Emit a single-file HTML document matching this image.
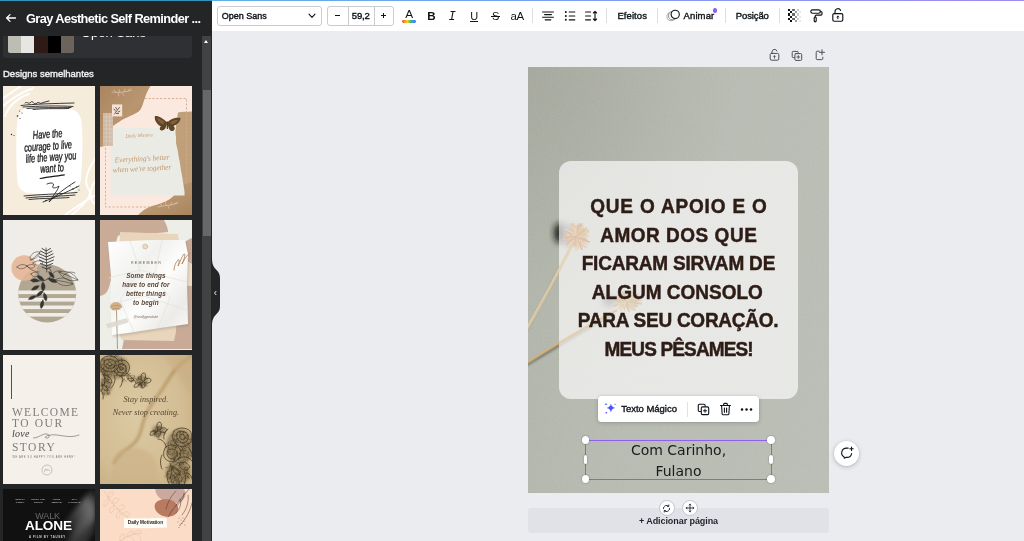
<!DOCTYPE html>
<html lang="pt-BR">
<head>
<meta charset="utf-8">
<title>Gray Aesthetic Self Reminder</title>
<style>
*{box-sizing:border-box;margin:0;padding:0}
html,body{width:1024px;height:541px;overflow:hidden}
body{position:relative;background:#ebecf0;font-family:"Liberation Sans",sans-serif;color:#0e1318}
.abs{position:absolute}
#topline{left:0;top:0;width:1024px;height:1px;background:linear-gradient(90deg,#2f93bd 0,#2f93bd 211px,#5fb0e6 212px,#7f9cf0 60%,#a08af0 100%);z-index:50}
/* ---------- sidebar ---------- */
#side{z-index:10;left:0;top:0;width:211.5px;height:541px;background:#232526;overflow:hidden}
#side .hdr{left:0;top:0;width:211px;height:36px;background:#232526;z-index:5}
#side .title{left:26px;top:11.3px;font-size:12.8px;font-weight:bold;color:#fff;white-space:nowrap;letter-spacing:-.6px;line-height:15px}
#card{left:3px;top:20px;width:188.5px;height:38px;background:#2f3033;border-radius:3px}
#sw{left:5px;top:4px;width:66px;height:29px;border-radius:2px;overflow:hidden;display:flex}
#sw i{flex:1;display:block}
#fontname{left:78px;top:3.6px;font-size:13px;color:#fff;white-space:nowrap;line-height:17px}
#simil{left:3px;top:67.6px;font-size:9.5px;color:#f0f0f1;white-space:nowrap;line-height:12px;-webkit-text-stroke:.4px #f0f0f1}
.th{position:absolute;width:91.8px;height:129.7px;overflow:hidden}
#track{left:201.5px;top:36px;width:9.3px;height:505px;background:#424242}
#thumb{left:203px;top:90px;width:7.5px;height:146px;background:#686868}
#uparr{left:203.6px;top:39.8px;width:0;height:0;border-left:2.6px solid transparent;border-right:2.6px solid transparent;border-bottom:3.2px solid #fff}
/* ---------- toolbar ---------- */
#bar{left:0;top:0;width:1024px;height:31px;background:#fff}
.box{position:absolute;border:1px solid #c9ccd2;border-radius:3px;background:#fff}
.tb{position:absolute;font-size:9.5px;line-height:12px;white-space:nowrap;color:#0e1318;-webkit-text-stroke:.38px #0e1318}
.dv{position:absolute;top:8px;width:1px;height:15px;background:#dcdee2}

/* ---------- workspace ---------- */
#page{left:528px;top:67px;width:301px;height:426px;overflow:hidden;background:
 radial-gradient(ellipse 70% 55% at 0% 0%,rgba(150,152,141,.45) 0,rgba(150,152,141,0) 100%),
 linear-gradient(100deg,#aeb1a6 0,#b6b9af 42%,#b8bcb3 100%)}
#glass{left:31px;top:93.5px;width:239px;height:238px;border-radius:12px;background:rgba(255,255,255,.66)}
.ml{position:absolute;left:0;width:301px;text-align:center;font-weight:bold;font-size:19px;line-height:22px;color:#2e1c16;white-space:nowrap;transform:scaleY(1.05);transform-origin:50% 80%;-webkit-text-stroke:.45px #2e1c16}
#sel{left:585px;top:439.5px;width:186.6px;height:40.5px;border:1.5px solid #8f5ff5}
.hd{position:absolute;width:7.6px;height:7.6px;border-radius:50%;background:#fff;box-shadow:0 0 1.5px rgba(30,30,40,.55)}
.pill{position:absolute;width:3.6px;height:9.4px;border-radius:2px;background:#fff;box-shadow:0 0 1.5px rgba(30,30,40,.55)}
.sig{position:absolute;left:0;width:301px;text-align:center;font-family:"DejaVu Sans","Liberation Sans",sans-serif;font-size:14px;line-height:20px;color:#1a1a1a;white-space:nowrap}
#ftb{left:598px;top:396px;width:161px;height:25.5px;background:#fff;border-radius:3.5px;box-shadow:0 0 0 .5px rgba(60,64,72,.08),0 1px 4px rgba(40,44,52,.22)}
#addp{left:528px;top:508px;width:301px;height:25px;border-radius:3px;background:#e1e2e7}
.rb{position:absolute;width:15.8px;height:15.8px;border-radius:50%;background:#fff;border:1px solid #c2c6ce}
#cmt{left:834px;top:440.5px;width:25px;height:25px;border-radius:50%;background:#fff;box-shadow:0 1px 4px rgba(40,44,60,.28),0 0 0 .5px rgba(60,64,72,.06)}

.hw{font:italic 11.500px/12px "Liberation Sans",sans-serif;color:#1c1c1c;text-align:center;white-space:nowrap;transform:rotate(-4deg) scaleX(.64);letter-spacing:0;-webkit-text-stroke:.35px #1c1c1c}
.sc{font-family:"Liberation Serif",serif;font-style:italic;line-height:9px;color:#c49a6f;text-align:center;white-space:nowrap;transform:rotate(-3deg)}
.t4{left:0;width:92px;text-align:center;font:italic bold 6.400px/8px "Liberation Sans",sans-serif;color:#5b4636;white-space:nowrap;letter-spacing:.1px}
.t5{left:9px;font:11.500px/13px "Liberation Serif",serif;color:#807d78;white-space:nowrap;letter-spacing:1.050px}
.t6{left:0;width:92px;text-align:center;font:italic 8.200px/10px "Liberation Serif",serif;color:#57472f;white-space:nowrap}
.t7{top:8.600px;font:bold 2.200px/3.300px "Liberation Sans",sans-serif;color:#c9c9c9;text-align:center;white-space:nowrap;letter-spacing:.2px}
</style>
</head>
<body>
<div id="topline" class="abs"></div>

<!-- SIDEBAR -->
<div id="side" class="abs">
  <div id="card" class="abs">
    <div id="sw" class="abs"><i style="background:#bdbdb4"></i><i style="background:#e6e6e2"></i><i style="background:#2e1b15"></i><i style="background:#000"></i><i style="background:#6c635d"></i></div>
    <div id="fontname" class="abs">Open Sans</div>
  </div>
  <div class="hdr abs">
    <svg class="abs" style="left:5px;top:12px" width="12" height="12" viewBox="0 0 12 12" fill="none" stroke="#fff" stroke-width="1.3" stroke-linecap="round" stroke-linejoin="round"><path d="M10.5 6H1.8M5 2.6 1.6 6 5 9.4"/></svg>
    <div class="title abs">Gray Aesthetic Self Reminder ...</div>
  </div>
  <div id="simil" class="abs">Designs semelhantes</div>
  <!--T12a-->  <!-- thumb 1 -->
  <div class="th" style="left:2.900px;top:85.700px;background:#f6ecdc">
    <svg class="abs" style="left:0;top:0" width="92" height="129" viewBox="0 0 92 129" fill="none" stroke-linecap="round" stroke-linejoin="round">
      <path d="M-2 22C8 12 20 6 30 2M-2 14C6 8 12 4 18 0M2 30C6 20 14 12 26 8" stroke="#fff" stroke-width="1.900" opacity=".95"/>
      <path d="M94 70C84 84 80 96 86 104C90 110 80 120 66 131M94 92C88 100 84 112 92 118M60 131C70 122 78 118 94 108" stroke="#fff" stroke-width="1.900" opacity=".95"/>
      <path d="M25 22C38 21 58 21 68 23C76 25 79 32 79 42C80 58 79 80 78 92C77 102 72 107 62 108C48 109 34 108 26 107C17 106 14 100 14 90C13 72 13 52 14 38C15 28 18 23 25 22Z" fill="#fff"/>
      <g stroke="#1a1a1a" stroke-width=".85">
        <path d="M18 19.500C30 18 52 17.500 71 17M20 21C36 20 56 19.500 70 20.500M24 22.500C40 21 60 22 68 21.500M22 17C24 15 26 19 28 16C30 14 31 20 34 17C36 15 37 19 40 16.500L46 15M30 23.500C44 22 58 23 66 22.500"/>
        <path d="M21 110C34 108.500 56 108 74 106.500M23 112C40 110 58 110.500 72 109M26 113.500C40 112 56 112.500 66 111.500M44 98C48 96 52 97 50 100C48 103 54 102 56 100C55 104 50 110 46 116C52 110 62 102 72 96M40 116C50 112 60 108 76 100"/>
        <path d="M37.200 92.500C44 91 54 90 61.300 88.800" stroke-width="1.200"/>
      </g>
      <g fill="#222"><circle cx="14.500" cy="30" r=".8"/><circle cx="17" cy="32.500" r=".6"/><circle cx="19" cy="27" r=".5"/><circle cx="8.500" cy="48.500" r=".7"/><circle cx="11" cy="49.500" r=".5"/><circle cx="16.500" cy="25" r=".5"/><circle cx="70" cy="103" r=".8"/><circle cx="73.500" cy="101" r=".6"/><circle cx="76" cy="104" r=".5"/><circle cx="43" cy="114.500" r=".8"/><circle cx="67" cy="100" r=".5"/></g>
    </svg>
    <div class="abs hw" style="left:0;top:42.500px;width:89px">Have the</div>
    <div class="abs hw" style="left:0;top:54.500px;width:90px">courage to live</div>
    <div class="abs hw" style="left:2px;top:65.800px;width:92px">life the way you</div>
    <div class="abs hw" style="left:3px;top:76.800px;width:92px">want to</div>
  </div>
  <!-- thumb 2 -->
  <div class="th" style="left:99.900px;top:85.700px;background:#fbe9df">
    <svg class="abs" style="left:0;top:0" width="92" height="129" viewBox="0 0 92 129" fill="none">
      <defs><linearGradient id="br1" x1="0" y1="0" x2="1" y2="1"><stop offset="0" stop-color="#a98661"/><stop offset=".5" stop-color="#b9966f"/><stop offset="1" stop-color="#a88560"/></linearGradient></defs>
      <path d="M78 26.500C82 25.500 87 26 92 25.500V111H80L74 60L76 40Z" fill="#c0a07a"/>
      <rect x="5.500" y="12.500" width="81" height="108.500" stroke="#d5a98c" stroke-width=".9" stroke-dasharray="2.200 1.700"/>
      <path d="M0 0H50.500C48.500 3 47 6 45.500 10C44 14 43 19 40.500 23.500C38 27 34 28 30 30C26 32 22 33.500 19 36C16 38 14 39 12.500 40.500L12.500 58.500L0 61Z" fill="url(#br1)"/>
      <path d="M92 129H38C42 125 46 122 52 120C58 118 64 117 70 113C74 110 77 106 80 102C82 99 86 97 92 96Z" fill="url(#br1)"/>
      <path d="M10.700 42H75C74.500 46 76.500 50 76 54C75.500 58 77.500 62 78 66C78.500 71 80 76 80.500 81C81 86 82.500 91 83 96C83.500 101 85 105 84.500 109.500H10.700Z" fill="#ebebe6"/>
      <path d="M3 27H13V60H3Z" fill="#cfbcaa" opacity=".9"/>
      <path d="M3 31H13M3 35H13M3 39H13M3 43H13M3 47H13M3 51H13M3 55H13M6.300 27V60M9.700 27V60" stroke="#e6d8c9" stroke-width=".5"/>
      <rect x="12" y="18.400" width="10.200" height="12" fill="#f4e2d6"/>
      <path d="M14.500 28C16 25.500 18 23.500 19.500 21.500M15.500 25L14 23M17 23.500L15.800 21.500M18 26L19.800 25.300M16.500 27.500L18.500 27.500" stroke="#3b2a1e" stroke-width=".7" stroke-linecap="round"/>
      <g stroke="#efe2cf" stroke-width=".5" stroke-linecap="round" opacity=".9"><path d="M12 6C18 7 26 6 32 4M16 6.500L14 4M20 6.800L19 3.500M24 6.300L25 3M28 5.300L30 2.500M22 7L24 9.500M18 7L19 10"/><path d="M58 121C64 119 70 120 78 117M62 120L60 117.500M66 119.500L65.500 116.500M70 119.500L72 116.500M74 118.500L77 116M68 119.800L69 122.500"/></g>
      <!-- butterfly -->
      <g fill="#5e4526"><path d="M67 36.500C63 32 58 29.500 55 30C54 33 56 38 61 40.500C59 42 59.500 44.500 62 44.500C64.500 44.500 66.500 41.500 67 36.500Z"/><path d="M67.500 36.500C70 33 76 31 80.500 32C80.500 35 78 38.500 73.500 40C75.500 42 75 44.500 72.500 45C70 45.500 68 42 67.500 36.500Z"/><path d="M66.600 35.500L67.800 35.500L67.800 43L66.800 43Z" fill="#2e2010"/></g>
      <g fill="#8a6a3d" opacity=".8"><path d="M64.500 36C61.500 33.500 59 32.200 57 32.300C57.500 34.500 59.500 37 63 38.500Z"/><path d="M70 36.500C72.500 34.500 75.500 33.500 78 33.800C77.500 35.500 75.500 37.500 72 38.500Z"/></g>
    </svg>
    <div class="abs sc" style="left:17px;top:45px;width:44px;font-size:5px">Daily Mantra</div>
    <div class="abs sc" style="left:8px;top:68.700px;width:68px;font-size:7.500px;letter-spacing:-.1px">Everything's better</div>
    <div class="abs sc" style="left:8px;top:78.700px;width:68px;font-size:7.500px;letter-spacing:-.1px">when we're together</div>
  </div>
<!--T12b-->
<!--T34a-->  <!-- thumb 3 -->
  <div class="th" style="left:2.900px;top:220px;background:#f0ece7">
    <svg class="abs" style="left:0;top:0" width="92" height="129" viewBox="0 0 92 129" fill="none" stroke-linecap="round" stroke-linejoin="round">
      <defs><clipPath id="c3"><circle cx="44.200" cy="73.500" r="29"/></clipPath></defs>
      <circle cx="44.200" cy="73.500" r="29" fill="#b1a793"/>
      <g clip-path="url(#c3)" fill="#f0ece7"><rect x="10" y="70.500" width="70" height="3.600"/><rect x="10" y="78" width="70" height="3.600"/><rect x="10" y="85.500" width="70" height="3.600"/><rect x="10" y="93" width="70" height="3.600"/></g>
      <circle cx="21.200" cy="48" r="12.800" fill="#e5b594" opacity=".88"/>
      <g stroke="#2f2f2d" stroke-width=".5">
        <path d="M27 37C29 33 33 31 37 32C36 36 32 39 28 40ZM28 40C31 38 34 35 37 32M30 43C34 40 38 40 40 43C37 46 32 46 30 43ZM14 47C17 44 21 44 24 46C21 49 17 50 14 47ZM24 46C27 44 30 44 32 46C30 49 26 49 24 46ZM24 46C28 50 32 52 36 52M28 54C31 51 35 52 36 55C33 58 29 57 28 54Z"/>
        <path d="M56 52C62 50 70 52 75 60C68 62 60 60 56 52ZM56 52C62 54 68 57 75 60M60 56C63 52 68 51 72 53M52 60C58 56 66 58 70 64C64 67 56 66 52 60ZM52 60C58 61 64 62 70 64M48 56C50 52 54 50 58 51"/>
      </g>
      <g fill="#353533" stroke="#353533" stroke-width=".5">
        <path d="M43 28L43.800 52" fill="none" stroke-width=".7"/>
        <path d="M43.200 31L39 28.500M43.200 31L47.500 28.500M43.300 34L37.500 31M43.300 34L49 31M43.400 37L36.500 33.800M43.400 37L50 33.800M43.500 40L36 36.800M43.500 40L51 36.800M43.600 43L36.500 40M43.600 43L50.500 40M43.700 46L37.500 43.500M43.700 46L49.500 43.500M43.800 49L39 47M43.800 49L48 47" fill="none" stroke-width=".9"/>
        <path d="M30 62C36 60 42 62 46 58C50 54 48 50 46 48" fill="none" stroke-width=".7"/>
        <path d="M36 60.500C33 58 29.500 58.500 27.500 60.500C30.500 62.500 34 62.500 36 60.500ZM41 60.500C40 56.500 36.500 55 34 56C35.500 59.500 38.500 61 41 60.500ZM45 58.500C47 62 51 63.500 54 62C52 58.500 48 57.500 45 58.500ZM40 62C43 65 42.500 69 40 71C37.500 68 38 64 40 62ZM36 66C33 65 29.500 67 28.500 70C32 70.500 35 69 36 66ZM40 71C39.500 74 36.500 76.500 33.500 76.500C34 73 37 71 40 71ZM41 73C44 74.500 45 78.500 43 81C40.500 79 40 75.500 41 73ZM40 80C41.500 83 40.500 87 38 88.500C36.500 85.500 37.500 82 40 80ZM33 76C30 75 26.500 76.500 25.500 79.500C29 80 32 78.500 33 76ZM46 52C49 52.500 51.500 55 51 58C48 57 46 55 46 52Z"/>
      </g>
    </svg>
  </div>
  <!-- thumb 4 -->
  <div class="th" style="left:99.900px;top:220px;background:#eeeee8">
    <svg class="abs" style="left:0;top:0" width="92" height="129" viewBox="0 0 92 129" fill="none" stroke-linecap="round" stroke-linejoin="round">
      <defs><linearGradient id="wp" x1="0" y1="0" x2="1" y2="1"><stop offset="0" stop-color="#ffffff"/><stop offset=".35" stop-color="#f1f1ef"/><stop offset=".55" stop-color="#fdfdfc"/><stop offset=".8" stop-color="#ecebe8"/><stop offset="1" stop-color="#fafaf9"/></linearGradient><filter id="b4"><feGaussianBlur stdDeviation=".8"/></filter></defs>
      <path d="M0 0H64C66 4 68 8 68 12C60 14 20 13 18 16C14 22 16 50 12 58C8 66 10 74 0 76Z" fill="#c9ab98"/>
      <path d="M92 18C86 20 82 24 80 30L78 60L62 80L60 118L24 119L22 129H92Z" fill="#c8aa97"/>
      <path d="M20 12L78 14L80 28L78 60L76 112L74 121L22 120L18 112L19 60Z" fill="#e9d5bc"/>
      <path d="M76 40C82 40 88 41 92 44V66C86 66 80 64 76 60Z" fill="#ecd9c2"/>
      <path d="M9 24L52 22L86 22L89 36L88 64L89 106L60 110L28 115L13 117L11 84L12 56Z" fill="#8b8476" opacity=".35" filter="url(#b4)"/>
      <path d="M8 22L50 20L85 20L88 34L87 62L88 104L60 108L28 113L12 115L10 84L11 56Z" fill="url(#wp)"/>
      <path d="M30 21L40 50L20 80L34 112M62 20.500L54 56L70 78L58 108M9 58L40 50L87 62M10 84L44 76L87 90" stroke="#e2e2df" stroke-width=".8" opacity=".9"/>
      <circle cx="45.200" cy="26.500" r="2.500" fill="#e9dcc6" stroke="#bda98c" stroke-width=".5"/>
      <path d="M74 50C74 46 76 42 78 40C80 38 79 44 78 46C80 42 82 36 84 34C86 33 84 40 82 44C85 38 88 34 90 33" stroke="#a87a4f" stroke-width=".8"/>
      <path d="M16.500 90L17.500 129" stroke="#8c7a55" stroke-width=".7"/>
      <path d="M10 86.500C11 83 14 81.500 17 82C20 82.500 22 84.500 22 87C20 89.500 17 90.500 14.500 90.500C12.500 90.500 10.500 89 10 86.500Z" fill="#d2b08a"/>
      <path d="M11 87C13 85.500 16 85 18.500 85.500C20 86 21 86.500 21.500 87.500M12.500 89C15 88 18 88 20 89" stroke="#b08a5e" stroke-width=".6"/>
      <path d="M6 104L27 98L28.500 102.500L7.500 108.500Z" fill="#dad8cd" opacity=".85"/>
    </svg>
    <div class="abs" style="left:0;top:40.500px;width:92px;text-align:center;font:3.600px/5px 'Liberation Sans',sans-serif;letter-spacing:1.300px;color:#6d5a49;text-indent:1.300px">REMEMBER</div>
    <div class="abs t4" style="top:52.200px">Some things</div>
    <div class="abs t4" style="top:61.100px">have to end for</div>
    <div class="abs t4" style="top:70px">better things</div>
    <div class="abs t4" style="top:78.900px">to begin</div>
    <div class="abs" style="left:0;top:95.200px;width:92px;text-align:center;font:italic 3.400px/5px 'Liberation Sans',sans-serif;color:#7a6757">@reallygreatsite</div>
  </div>
<!--T34b-->
<!--T56a-->  <!-- thumb 5 -->
  <div class="th" style="left:2.900px;top:354.600px;background:#f5f1ea">
    <div class="abs" style="left:8.600px;top:10px;width:.8px;height:34.500px;background:#55534f"></div>
    <div class="abs t5" style="top:51.300px;letter-spacing:1.350px">WELCOME</div>
    <div class="abs t5" style="top:62.600px;letter-spacing:1.600px">TO OUR</div>
    <div class="abs" style="left:9px;top:73.800px;font:italic 10px/12px 'Liberation Serif',serif;color:#3c3b39;white-space:nowrap;letter-spacing:.3px">love</div>
    <svg class="abs" style="left:30px;top:75.300px" width="48" height="12" viewBox="0 0 48 12" fill="none" stroke="#55534f" stroke-width=".55" stroke-linecap="round"><path d="M0 8C6 8 10 3 14 4C18 5 16 9 13 8C10 7 16 4 24 5C32 6 38 8 46 5"/></svg>
    <div class="abs t5" style="top:86.200px;letter-spacing:1.500px">STORY</div>
    <div class="abs" style="left:9.500px;top:101.100px;font:2.600px/4px 'Liberation Sans',sans-serif;letter-spacing:.62px;color:#77746f;white-space:nowrap">WE ARE SO HAPPY YOU ARE HERE!</div>
    <svg class="abs" style="left:38px;top:109px" width="12" height="12" viewBox="0 0 12 12" fill="none" stroke="#8a8782" stroke-width=".45"><circle cx="6" cy="6" r="5"/><path d="M3.500 7.500C4.500 4.500 5 4 5.500 6C6 8 6.500 5 7 5.500C7.500 6 8 7 8.800 6.500" stroke-linecap="round"/></svg>
  </div>
  <!-- thumb 6 -->
  <div class="th" style="left:99.900px;top:354.600px;background:#d3bd94">
    <svg class="abs" style="left:0;top:0" width="92" height="130" viewBox="0 0 92 130" fill="none" stroke-linecap="round" stroke-linejoin="round">
      <defs><radialGradient id="pg" cx=".4" cy=".45" r=".8"><stop offset="0" stop-color="#dccaa4"/><stop offset=".6" stop-color="#d3bd94"/><stop offset="1" stop-color="#c5aa7e"/></radialGradient><filter id="b6"><feGaussianBlur stdDeviation="1.600"/></filter></defs>
      <rect width="92" height="130" fill="url(#pg)"/>
      <path d="M92 0C84 6 76 12 70 22C64 32 60 38 54 46C48 54 44 62 42 72C40 80 38 86 30 92C24 96 18 100 14 108" stroke="#a27b45" stroke-width="2.400" opacity=".7" filter="url(#b6)"/>
      <path d="M60 0H92V40C84 30 78 20 72 12C68 6 64 2 60 0Z" fill="#cbb084" opacity=".6" filter="url(#b6)"/>
      <path d="M20 96C30 90 44 92 52 100C58 106 56 118 60 130H10C12 118 12 104 20 96Z" fill="#ccb185" opacity=".55" filter="url(#b6)"/>
      <g fill="#4a3c22" filter="url(#b6)" opacity=".42"><ellipse cx="14" cy="12" rx="15" ry="12"/><ellipse cx="6" cy="30" rx="6" ry="10"/><ellipse cx="42" cy="26" rx="6" ry="6"/><ellipse cx="80" cy="92" rx="14" ry="18"/><ellipse cx="78" cy="118" rx="12" ry="12"/><ellipse cx="58" cy="76" rx="6" ry="6"/></g>
      <!--H6--><path d="M11.7 12.3Q10.6 12.7 9.6 12.8M4.2 11.3Q3.0 12.2 3.1 13.8M18.4 0.9Q17.1 1.2 15.3 1.1M13.8 1.3Q13.7 1.7 15.2 2.3M11.3 18.5Q11.3 20.0 11.2 21.0M11.8 6.1Q10.8 6.5 8.6 6.1M7.8 5.1Q8.7 5.4 8.7 6.1M22.7 8.5Q20.5 8.2 19.8 8.9M24.5 10.3Q22.8 10.6 22.5 10.5M20.8 5.9Q22.4 6.6 22.6 6.4M2.3 5.4Q3.4 5.1 3.6 5.8M14.7 9.8Q15.2 10.8 16.9 11.3M2.3 9.3Q3.7 10.3 3.6 10.3M7.5 19.5Q8.9 20.3 9.1 20.7M5.0 5.7Q3.9 5.6 3.6 6.9M1.5 12.8Q2.2 13.6 3.3 14.5M25.9 10.6Q25.0 11.5 25.2 13.5M6.0 4.2Q4.4 6.0 3.9 6.4M23.7 13.3Q23.1 14.7 24.0 14.6M5.7 15.5Q6.8 16.2 7.6 17.6M3.9 15.8Q4.8 16.6 5.5 16.2M16.2 6.2Q14.6 6.0 14.6 6.6M11.5 1.3Q12.4 1.2 13.1 2.3M9.1 19.6Q8.2 19.8 6.6 19.8M-0.4 14.0Q-0.6 16.1 -0.3 16.7M1.1 12.0Q0.5 13.4 -0.9 14.2M8.9 15.1Q7.3 16.0 6.1 16.0M23.2 12.6Q22.9 13.7 22.4 14.4M1.2 14.1Q0.1 13.9 -1.7 14.1M19.6 12.8Q19.2 14.6 20.1 15.6M-0.2 13.2Q0.2 14.1 -0.1 14.9M16.2 20.3Q16.3 21.0 17.1 21.1M4.7 3.7Q3.4 4.7 2.3 4.5M8.2 14.6Q9.5 15.9 9.8 15.9M23.6 8.5Q22.8 9.3 23.2 10.2M22.4 18.7Q21.1 19.4 20.5 21.1M11.6 6.1Q12.6 6.7 13.2 7.3M7.8 18.5Q6.1 17.8 5.7 18.6M18.8 12.6Q18.9 13.1 20.4 14.8M11.7 0.5Q10.4 0.2 10.3 1.4M16.6 9.8Q16.6 11.7 15.6 12.1M18.2 4.4Q17.4 5.1 18.3 5.9M19.0 3.9Q19.9 4.7 20.2 5.4M16.2 16.6Q17.3 17.3 17.1 19.3M25.1 15.9Q26.3 17.0 27.0 16.7M9.6 12.5Q9.0 13.0 7.0 13.5M17.2 4.5Q16.6 5.9 15.4 6.7M5.0 19.8Q3.5 20.4 1.8 20.0M8.0 20.0Q6.5 20.3 6.3 20.9M14.4 16.9Q14.9 16.8 14.5 18.2M21.4 3.8Q21.5 4.4 22.8 6.2M13.5 15.9Q13.0 16.5 11.2 17.2M5.2 11.6Q6.2 12.7 6.8 13.7M22.6 12.3Q23.7 13.8 23.7 13.9M4.8 18.7Q3.8 18.3 2.6 18.9M14.0 11.1Q14.6 11.7 13.6 12.3M10.2 17.6Q10.3 18.0 9.8 19.8M14.1 9.1Q12.2 9.3 11.1 9.5M2.6 9.5Q1.3 10.1 0.0 11.2M4.4 13.6Q4.1 13.0 2.9 13.9M4.4 5.0Q3.7 6.0 3.4 6.5M1.9 16.1Q2.6 16.0 4.0 16.9M13.8 9.6Q14.3 10.0 14.6 11.5M4.7 13.9Q4.8 15.1 3.8 15.9M23.0 5.1Q22.7 5.8 21.1 7.2M7.8 20.3Q9.7 20.7 10.3 22.3M5.7 16.0Q6.7 16.4 6.7 17.0M21.1 2.8Q20.7 3.5 21.9 5.2M18.1 20.1Q17.4 20.5 16.7 20.2M13.1 15.1Q13.0 14.7 14.2 15.8M14.4 11.3Q13.8 11.6 14.1 12.8M11.9 16.8Q12.5 17.6 13.0 18.6M15.8 0.3Q14.5 1.4 14.1 2.6M19.7 8.9Q20.3 8.6 21.0 9.8M24.0 17.6Q23.3 18.7 22.3 20.0M15.8 11.1Q14.0 11.8 13.0 11.2M19.8 17.1Q19.6 18.3 18.2 18.2M18.5 16.9Q18.1 16.9 17.0 18.2M8.6 10.3Q9.7 10.5 10.5 10.4M17.7 7.4Q17.1 8.3 16.5 9.5M18.6 16.8Q18.2 17.2 17.4 16.8M6.2 8.8Q6.8 8.3 7.8 9.1M6.0 19.9Q6.6 21.1 5.7 22.1M15.7 16.7Q16.7 16.9 18.8 17.1M3.7 10.9Q4.2 11.4 3.3 12.1M13.7 13.2Q14.4 14.1 14.5 14.8M6.9 15.8Q6.9 15.5 7.7 16.7M3.4 16.6Q4.3 17.3 4.4 19.4M11.0 10.5Q10.2 11.3 9.3 10.6M19.2 10.3Q18.0 9.8 16.4 10.5M16.5 10.0Q17.0 9.8 17.5 10.8M11.4 14.7Q11.7 15.4 11.6 16.4M20.8 11.7Q19.6 11.3 17.7 11.7M21.0 13.7Q21.6 14.6 21.7 15.3M15.6 13.9Q14.6 15.2 14.4 15.0M6.6 9.4Q6.4 9.3 6.1 10.7M1.4 14.9Q1.0 16.1 1.0 17.3M4.9 7.6Q3.2 8.0 2.9 9.6M21.7 13.7Q20.9 13.9 20.4 14.8M21.7 8.1Q20.7 9.6 20.2 10.9M19.9 20.3Q19.5 21.8 20.3 22.1M14.8 10.7Q14.7 10.7 13.8 12.2M5.0 14.6Q6.2 15.1 6.7 15.0M6.9 3.1Q7.3 3.7 8.1 5.5M18.9 12.5Q18.0 12.8 15.9 13.3M21.5 6.7Q22.7 8.2 22.6 8.4M6.0 8.0Q6.2 8.7 6.7 9.7M4.5 12.4Q4.1 13.2 2.6 13.8M3.9 16.7Q2.4 17.0 2.3 17.3M14.2 12.5Q13.5 11.9 11.7 12.7M14.3 17.3Q15.3 18.2 15.6 17.7M1.4 14.0Q2.8 14.1 3.8 15.1M5.2 16.8Q4.9 17.9 5.0 19.6M26.1 14.8Q26.5 16.3 26.2 17.1M24.6 9.0Q24.1 10.2 22.5 10.3M25.8 14.1Q26.2 15.3 25.6 16.7M10.8 3.2Q9.5 3.8 8.6 5.5M4.7 9.3Q5.0 10.3 6.6 11.8M2.2 14.3Q0.9 14.7 1.0 15.3M15.4 20.0Q15.6 19.6 16.8 20.2M5.6 15.8Q4.8 16.2 5.1 17.4M3.8 16.7Q5.0 17.6 5.1 18.6M6.3 19.5Q5.5 20.5 4.5 20.0M12.5 4.9Q14.5 4.9 15.6 5.3M13.8 11.3Q15.1 12.1 15.8 13.8M-0.7 10.4Q0.2 11.9 0.4 13.0M3.4 3.5Q4.5 4.2 4.3 4.9M6.5 11.8Q6.9 12.9 8.9 13.0M22.7 18.1Q23.9 17.7 24.4 18.5M12.4 10.3Q11.8 10.2 10.1 10.6M8.9 28.3Q8.7 28.1 7.6 28.7M6.4 30.5Q7.4 30.9 9.0 31.9M1.8 26.1Q1.7 27.7 2.0 28.7M2.1 27.9Q2.8 29.7 2.4 31.0M8.1 24.7Q7.1 26.6 7.7 26.8M9.0 24.1Q8.5 25.0 8.4 25.8M4.0 26.7Q4.0 27.5 4.8 29.1M8.3 26.6Q7.5 26.5 6.0 27.0M7.8 34.2Q9.2 34.9 9.5 35.2M1.9 24.5Q2.4 24.2 3.2 25.2M10.2 28.5Q10.6 30.3 10.1 31.0M4.9 26.6Q4.9 27.5 5.2 27.8M7.6 32.2Q8.3 32.5 9.5 32.3M2.1 27.6Q2.5 29.1 2.0 30.3M2.6 35.3Q1.3 35.7 0.4 36.0M2.4 34.3Q1.6 34.9 0.2 34.4M7.3 24.0Q8.2 24.5 8.9 24.4M4.3 38.6Q4.1 40.3 5.2 40.5M6.4 31.2Q6.9 32.9 6.1 32.9M9.2 32.0Q10.2 33.2 11.8 33.1M3.4 31.5Q2.8 31.2 2.1 32.3M7.6 26.2Q6.7 27.4 6.2 28.5M3.0 29.4Q4.0 29.3 4.8 30.2M6.2 25.3Q6.2 25.4 5.8 27.1M7.7 22.9Q6.5 22.9 5.3 23.2M7.2 33.8Q6.2 35.5 5.3 35.6M9.4 37.1Q9.8 38.7 10.0 39.1M6.3 30.5Q6.3 31.3 6.9 33.4M8.3 38.0Q7.9 38.6 6.7 39.8M6.9 21.4Q7.9 21.6 8.9 22.2M1.5 33.9Q1.1 34.6 1.4 35.6M7.7 37.3Q7.6 39.1 8.3 40.1M6.7 38.1Q7.4 38.6 9.3 38.9M3.4 26.0Q4.4 27.1 4.1 27.1M5.0 27.1Q4.1 28.4 4.6 28.4M4.1 30.0Q2.5 29.8 1.0 30.6M4.0 38.5Q3.7 38.5 2.4 39.0M5.7 23.4Q3.8 24.2 2.8 24.6M2.9 37.6Q4.0 37.4 4.3 37.8M8.1 22.7Q7.2 23.3 6.4 25.2M38.7 23.7Q37.7 23.9 37.7 24.9M44.0 29.5Q45.1 30.8 45.0 31.8M38.7 23.6Q37.2 24.1 36.3 24.2M41.3 26.3Q41.4 26.6 41.2 27.6M39.0 29.6Q40.3 29.5 40.7 30.1M39.3 26.6Q41.4 26.7 41.8 28.2M41.5 29.0Q42.1 29.9 42.6 31.9M42.7 27.7Q43.7 28.9 43.7 30.0M42.1 30.1Q42.2 30.6 40.8 32.0M45.4 22.0Q45.0 23.2 44.8 23.6M45.4 29.5Q45.8 30.4 47.0 31.0M42.0 20.4Q41.7 22.3 41.2 22.9M38.2 21.8Q39.2 21.8 40.3 21.9M39.2 29.6Q40.7 30.0 42.1 30.3M45.5 22.9Q45.6 23.0 47.1 23.7M43.5 26.3Q43.6 27.7 45.1 28.1M38.1 23.1Q39.7 24.1 40.3 24.3M36.7 24.9Q37.8 24.9 37.4 26.4M41.9 29.1Q41.1 29.6 40.4 29.2M40.7 23.6Q40.1 25.0 41.0 24.9M45.2 28.8Q45.9 29.0 46.4 29.9M41.5 31.2Q42.7 32.2 42.3 32.9M36.5 24.8Q35.9 25.7 35.9 26.0M46.4 27.1Q45.2 28.0 44.4 27.8M40.6 29.4Q40.8 30.0 42.1 30.6M38.0 22.4Q38.5 23.0 39.6 23.8M46.4 22.5Q46.9 22.9 46.8 23.7M38.2 23.1Q39.0 24.2 39.2 26.0M40.3 21.8Q39.8 22.4 38.5 22.2M39.9 24.6Q41.0 25.4 42.7 25.4M80.5 76.9Q80.0 77.1 81.0 78.5M82.3 76.1Q82.9 76.3 83.4 77.8M85.0 83.9Q83.6 84.3 83.3 85.8M74.7 99.2Q75.6 99.7 75.3 101.1M75.0 86.7Q74.7 87.3 76.0 87.5M81.6 102.5Q81.0 103.2 79.8 102.6M73.2 98.4Q73.0 99.4 71.6 101.1M83.2 78.1Q82.7 78.8 83.6 80.0M75.9 91.9Q76.2 92.4 76.8 93.1M72.0 97.6Q72.3 98.0 73.0 98.6M71.6 94.8Q71.3 95.0 70.3 96.7M77.4 87.4Q77.7 87.6 79.4 87.8M82.1 90.9Q81.7 91.4 83.0 92.4M89.4 94.2Q89.8 95.1 91.1 96.1M82.8 107.5Q84.0 109.0 83.8 109.6M83.1 96.1Q83.0 97.6 83.6 98.1M89.1 88.0Q87.9 88.2 87.9 88.3M75.4 87.3Q74.2 86.9 73.9 87.4M84.3 83.0Q85.3 82.6 86.6 83.0M79.8 97.1Q79.8 98.8 79.5 99.5M91.3 86.3Q91.6 88.0 92.6 89.0M84.7 98.3Q82.7 98.7 81.9 98.7M79.8 94.2Q80.5 95.0 80.5 95.8M73.7 83.5Q74.1 83.5 74.5 84.8M70.5 99.0Q71.9 99.3 72.4 99.7M71.9 104.5Q70.9 104.7 70.7 105.0M87.1 88.3Q86.9 88.7 86.0 89.7M76.0 100.8Q74.9 101.4 73.5 102.2M85.0 96.2Q83.2 96.7 82.5 97.6M84.1 82.9Q84.7 83.9 85.1 83.5M84.5 89.3Q84.8 91.0 83.7 91.1M69.2 99.3Q69.4 99.9 70.4 99.7M81.0 91.4Q81.9 92.8 81.7 93.1M74.8 88.3Q75.1 89.4 73.8 90.9M84.7 93.6Q83.5 93.4 83.4 94.4M90.4 83.5Q90.1 83.5 90.5 85.0M81.6 79.9Q80.8 80.7 80.9 81.5M76.8 83.8Q78.1 83.6 78.1 84.0M79.6 108.9Q80.8 109.6 82.0 110.6M87.4 88.5Q88.8 88.9 89.6 88.9M74.7 106.9Q73.1 108.1 71.7 108.2M85.4 81.0Q85.6 80.4 86.9 81.1M76.6 100.6Q76.5 101.1 77.9 102.5M80.7 102.5Q79.4 103.8 78.5 104.2M87.9 101.1Q87.9 101.0 86.5 101.2M84.9 83.5Q84.5 83.3 83.7 83.9M77.3 87.6Q76.4 89.0 76.0 90.0M76.5 84.5Q75.0 84.5 74.7 85.0M85.8 82.2Q85.3 82.5 84.2 83.8M76.4 89.6Q77.4 89.4 78.6 89.7M80.9 107.4Q81.8 108.7 83.3 109.2M78.3 107.7Q79.4 107.9 79.9 109.0M74.6 98.0Q73.1 97.9 72.7 98.3M83.2 87.9Q83.1 89.2 82.5 89.3M88.6 96.4Q87.9 98.1 88.5 98.7M84.6 90.4Q83.9 90.9 83.5 92.2M82.4 94.5Q82.6 95.0 82.4 95.7M82.2 95.2Q81.5 96.2 80.8 95.5M85.7 85.6Q84.5 87.4 83.6 88.0M79.8 83.0Q79.4 84.1 77.6 84.2M87.1 92.4Q87.1 92.7 85.8 92.4M74.0 102.4Q74.8 103.1 74.3 104.7M74.7 96.9Q76.3 97.1 77.0 97.4M73.8 102.2Q72.7 103.5 71.3 103.4M87.1 80.2Q86.7 80.6 87.7 81.4M88.8 103.4Q89.3 104.2 90.2 103.9M82.8 105.7Q83.9 106.2 85.9 106.4M89.0 99.7Q90.0 99.7 91.1 101.2M76.1 85.7Q76.0 86.8 75.5 87.3M72.3 79.4Q71.1 79.6 71.1 81.1M90.6 95.7Q91.7 96.8 91.3 97.2M85.7 87.3Q85.7 88.3 86.8 88.9M78.2 102.9Q78.5 104.6 78.8 104.9M76.3 98.9Q76.8 100.3 78.1 100.5M74.9 104.1Q75.0 104.8 73.8 105.8M85.8 95.4Q85.8 95.7 86.1 96.8M78.6 107.5Q79.6 108.1 80.1 109.5M77.9 79.5Q76.9 79.5 76.3 80.0M87.7 103.9Q86.7 105.6 87.0 106.1M70.1 87.4Q70.9 88.3 71.1 89.8M68.6 96.5Q68.6 97.2 68.7 98.4M84.1 95.6Q83.3 95.6 81.0 95.9M87.9 97.1Q86.3 98.3 86.0 99.7M77.6 97.3Q78.4 98.1 80.1 99.3M71.4 88.4Q70.4 89.2 70.5 89.4M83.0 100.2Q84.3 101.7 84.9 102.2M70.9 90.9Q73.0 91.6 73.8 91.1M68.6 86.9Q67.8 88.5 68.3 89.2M75.2 92.2Q75.7 92.0 77.4 93.1M80.3 85.0Q79.5 84.8 79.0 86.1M73.2 90.4Q73.6 90.8 72.8 92.4M88.4 80.3Q87.1 80.5 86.2 80.5M77.9 75.4Q79.6 76.4 80.4 76.7M71.8 93.1Q72.1 93.9 73.2 93.2M83.4 103.8Q83.8 103.6 85.4 104.1M75.9 91.6Q75.9 93.1 74.5 94.3M80.0 105.7Q80.7 106.2 80.6 107.4M76.8 89.6Q76.8 90.5 77.0 91.5M69.5 92.9Q68.9 93.3 69.2 94.9M76.9 85.7Q77.4 86.5 77.0 87.3M68.2 88.8Q67.8 89.6 67.0 89.0M76.8 95.3Q77.3 96.3 77.5 97.0M75.6 91.9Q74.8 92.6 75.4 94.6M74.0 84.2Q73.8 84.6 72.4 85.4M74.9 98.1Q76.9 98.3 77.9 99.0M75.6 102.9Q73.9 104.0 73.7 104.4M69.2 96.2Q69.1 97.0 68.7 99.3M85.7 89.2Q85.5 89.9 84.0 91.9M86.8 90.0Q86.0 90.6 85.4 91.4M70.8 85.9Q69.8 86.9 69.9 86.9M84.0 93.6Q84.4 94.6 85.3 94.1M81.4 106.4Q82.3 107.5 83.0 107.6M79.3 76.1Q79.8 77.7 79.8 78.0M79.8 98.4Q79.7 100.1 80.8 101.0M72.0 94.9Q72.2 95.2 73.5 96.0M82.2 92.7Q83.1 93.6 83.0 94.9M82.0 91.3Q81.4 91.0 80.2 91.4M74.3 99.8Q73.4 101.2 73.9 101.5M77.1 99.4Q77.4 101.3 77.6 101.7M89.8 90.5Q90.3 90.7 89.9 92.2M75.4 103.8Q76.8 104.0 77.9 104.1M76.0 80.2Q75.1 79.7 73.3 80.6M86.8 82.4Q87.9 82.5 88.7 83.8M86.4 94.8Q85.2 95.1 83.5 95.8M75.0 104.2Q74.0 104.0 73.9 105.5M80.9 83.6Q80.8 84.3 81.9 85.0M74.5 84.7Q75.9 85.0 76.0 86.4M82.6 93.5Q82.1 95.0 81.1 95.2M86.6 83.8Q87.9 84.6 89.6 84.4M73.6 90.4Q74.8 91.6 74.7 92.8M81.6 86.9Q82.1 88.6 83.9 88.9M83.8 77.4Q83.2 77.0 82.4 77.9M84.0 77.3Q85.9 77.7 86.3 77.5M88.5 101.7Q88.5 101.9 88.4 103.0M80.6 87.0Q81.0 87.7 80.6 88.6M79.7 77.7Q80.5 78.9 79.8 80.0M71.2 85.2Q72.6 87.1 72.5 87.5M68.5 91.6Q68.3 93.1 67.8 94.1M80.5 107.6Q81.8 108.4 81.9 107.8M87.9 98.4Q88.3 100.1 87.8 100.8M88.0 88.9Q87.7 90.1 88.9 90.5M74.3 94.9Q74.5 95.8 74.1 96.8M73.6 105.0Q73.9 105.3 74.9 105.8M86.8 86.3Q87.3 87.2 88.6 88.0M74.1 104.8Q74.5 105.0 75.5 105.7M85.4 97.9Q83.9 99.0 83.6 99.3M73.9 82.4Q74.1 83.7 74.7 85.5M77.3 79.6Q75.9 80.9 75.1 81.3M77.1 84.8Q76.7 86.6 76.3 87.3M68.3 92.0Q69.2 92.0 68.8 93.2M70.9 126.3Q69.2 127.2 67.9 126.7M69.4 122.7Q68.0 123.1 67.8 123.0M87.2 123.0Q85.9 122.5 85.1 123.3M72.6 127.7Q73.1 127.1 74.1 128.0M73.4 111.0Q74.5 111.6 75.5 111.9M84.3 118.6Q83.2 118.0 83.0 118.8M73.4 123.7Q71.8 123.7 71.3 124.3M79.6 113.5Q78.3 114.6 77.1 115.4M86.3 117.2Q88.3 117.3 88.9 119.0M84.3 115.8Q84.5 116.3 85.8 116.1M71.3 124.6Q71.2 125.3 71.3 127.1M80.9 115.1Q80.7 116.1 81.1 117.6M87.2 119.8Q87.4 120.6 87.8 122.0M87.9 112.1Q87.1 111.9 85.1 112.7M78.2 128.7Q79.0 128.8 79.2 129.9M80.0 110.5Q78.5 110.9 78.3 110.8M74.3 119.3Q74.4 120.6 74.4 122.4M66.0 117.9Q67.0 118.7 67.6 119.7M68.2 117.9Q69.0 118.8 68.3 120.4M76.6 108.9Q76.5 109.8 75.3 109.8M72.1 126.9Q72.2 128.6 72.1 128.9M77.8 117.6Q78.6 118.5 79.5 119.9M70.7 111.7Q70.3 113.1 68.3 113.1M82.4 124.5Q82.1 125.1 80.7 126.8M85.6 113.7Q85.9 114.7 87.7 115.8M74.2 124.4Q74.4 126.1 73.2 127.3M67.5 121.7Q69.6 121.9 70.5 122.7M70.5 122.3Q69.5 122.8 68.2 124.5M83.4 108.3Q82.6 109.4 80.9 109.4M79.7 127.8Q79.0 128.5 78.7 129.7M85.1 112.0Q84.8 113.3 83.8 114.5M73.6 113.0Q74.9 114.4 75.7 114.4M73.9 127.4Q73.8 127.8 72.2 127.9M74.0 113.1Q73.2 114.8 73.8 115.3M78.9 117.4Q77.8 118.1 77.7 118.6M71.8 114.2Q72.2 114.4 73.1 114.5M88.8 121.1Q88.6 122.0 89.3 123.0M76.4 122.1Q75.8 123.6 74.7 123.7M87.7 112.5Q87.5 113.6 87.2 115.7M69.6 119.1Q70.8 119.8 71.3 121.1M84.4 121.2Q83.7 121.5 83.1 122.9M77.4 128.0Q76.1 127.9 76.2 128.5M82.7 116.6Q83.7 117.4 84.6 117.4M75.7 121.3Q74.3 122.7 74.4 123.3M77.4 107.4Q78.3 107.0 79.3 107.8M77.7 119.9Q77.9 120.9 79.4 122.6M71.3 126.0Q71.1 127.7 71.2 128.1M72.2 124.4Q71.3 125.1 70.9 126.1M76.9 113.9Q76.2 115.3 76.1 115.8M76.9 117.4Q75.7 118.4 75.0 118.2M75.6 121.8Q75.4 123.1 74.4 123.1M81.7 121.7Q81.6 123.4 82.2 124.2M78.9 128.6Q78.8 129.6 80.2 130.9M84.4 112.7Q83.9 114.3 83.8 114.2M67.4 119.8Q66.0 120.7 65.0 121.4M83.1 123.8Q81.9 124.9 81.4 125.4M79.5 119.0Q79.2 118.7 78.0 119.0M72.6 119.5Q72.0 120.8 72.4 121.7M87.4 121.6Q88.2 122.1 89.2 123.8M80.5 117.1Q80.5 119.4 80.2 120.3M74.5 123.7Q75.6 124.2 76.2 124.1M85.9 115.4Q86.6 115.3 87.1 116.8M75.0 121.5Q76.4 122.6 76.6 122.3M72.0 110.9Q73.1 111.5 73.3 111.4M72.3 117.8Q72.5 118.8 71.6 118.8M71.1 122.5Q71.1 122.8 70.0 124.0M77.4 113.9Q77.7 115.5 77.9 116.7M71.3 120.6Q72.5 121.2 74.1 122.1M76.3 125.2Q74.6 125.3 73.9 125.9M83.0 111.8Q81.1 112.1 80.2 112.8M71.5 122.8Q72.1 123.5 74.1 123.2M79.0 119.8Q79.4 120.8 80.3 120.2M80.4 126.0Q80.3 126.4 81.8 126.2M70.2 113.0Q69.3 114.1 68.9 115.2M72.9 119.3Q73.0 119.9 73.8 121.1M73.4 120.0Q74.5 120.5 74.4 121.1M78.3 113.9Q77.2 114.6 75.7 114.8M82.6 118.0Q82.9 118.9 83.2 119.9M78.7 118.7Q77.1 118.9 76.3 120.6M85.1 120.6Q86.2 121.8 86.1 121.9M82.4 122.2Q81.5 123.1 80.9 123.7M67.8 112.4Q66.7 112.2 65.5 112.6M86.7 118.4Q86.8 117.6 85.3 118.4M69.6 115.6Q69.4 116.9 69.0 116.9M76.5 123.8Q75.6 124.8 75.8 126.0M87.6 121.8Q88.5 122.2 89.2 123.2M79.9 120.9Q80.9 120.5 81.5 121.0M74.0 128.1Q74.1 128.4 73.8 129.5M85.5 122.9Q84.3 123.9 84.6 123.8M69.4 111.4Q70.1 112.2 70.9 111.6M73.7 112.7Q73.3 113.3 72.4 113.5M79.5 115.4Q79.1 115.4 78.1 116.3M77.9 128.3Q79.2 129.2 79.2 129.5M71.7 113.4Q71.3 114.3 69.4 114.6M81.1 115.4Q79.7 116.3 79.7 117.1M75.2 118.7Q76.6 118.6 76.5 118.9M73.9 110.3Q73.0 111.7 73.1 113.2M78.0 123.8Q77.3 125.0 77.7 125.5M77.2 125.6Q77.2 127.2 76.2 128.1M69.5 110.6Q70.8 110.5 70.8 110.7M86.3 120.2Q85.1 120.1 85.1 120.6M70.6 109.5Q71.1 109.7 72.6 110.9M78.9 115.3Q79.9 115.6 80.9 116.3M77.4 107.9Q76.8 107.8 76.8 109.4M87.3 119.9Q88.4 120.4 88.1 122.1M75.2 122.6Q76.4 123.0 76.2 125.0M72.8 113.4Q72.2 115.1 70.9 115.4M70.5 115.7Q68.6 117.0 68.0 116.9M83.8 126.1Q85.0 127.8 84.8 128.2M79.9 126.6Q78.7 127.3 77.0 126.6M53.7 74.8Q54.0 74.9 53.4 76.3M59.5 73.4Q59.7 74.3 60.8 75.4M55.2 74.4Q55.3 74.6 54.2 75.7M58.7 74.1Q58.5 73.8 59.9 74.1M59.7 70.8Q59.1 71.8 58.6 72.1M57.1 73.8Q57.7 74.6 57.6 75.5M60.2 71.8Q58.5 73.0 57.8 73.8M57.0 72.2Q56.5 73.8 55.4 74.0M52.4 75.5Q51.4 76.8 50.2 76.9M56.5 71.4Q55.8 71.2 55.9 72.5M58.4 71.5Q57.7 72.3 57.5 74.2M60.1 78.7Q59.1 79.7 57.9 79.6M55.4 79.3Q54.2 80.2 54.6 81.2M55.2 77.2Q54.4 77.7 55.1 79.4M59.3 78.2Q57.6 78.2 56.5 78.3M58.1 79.6Q58.5 80.9 59.1 82.5M57.8 74.3Q57.0 73.6 56.5 74.3M60.1 71.8Q61.2 72.7 62.0 72.7M57.3 73.5Q57.5 74.1 58.5 76.3M62.6 75.8Q63.9 76.5 64.0 76.4M52.8 78.1Q53.8 78.0 54.4 79.4M63.2 74.0Q63.8 73.9 65.7 75.2M59.8 75.6Q58.0 75.3 57.2 76.5M59.2 75.6Q59.7 77.1 61.0 78.1M63.4 77.4Q64.7 79.0 64.8 79.7M52.5 76.0Q54.2 77.1 54.6 77.0M55.0 76.6Q55.8 77.7 55.8 77.9M56.0 75.0Q55.2 75.5 54.5 77.2M61.9 76.0Q61.3 76.3 61.1 77.7M63.7 77.3Q65.0 78.0 66.1 78.3M31.8 23.1Q30.2 23.9 28.9 24.3M26.2 21.1Q26.5 22.0 27.3 23.4M32.9 25.0Q31.9 26.5 31.3 27.5M24.5 20.2Q26.5 20.3 27.2 21.0M26.3 18.2Q28.0 18.0 28.5 19.2M24.6 24.6Q25.5 25.5 26.8 26.5M23.8 19.9Q24.4 20.0 24.2 21.6M29.9 25.0Q29.7 25.0 30.8 26.4M32.1 23.0Q33.3 22.8 34.2 23.1M21.5 21.2Q22.0 23.3 22.9 24.0M33.2 22.7Q33.8 23.4 35.8 23.8M26.7 18.6Q26.2 19.3 24.4 18.6M31.6 23.5Q32.0 24.3 31.8 26.2M28.4 21.1Q28.7 22.6 28.3 23.8M32.0 25.3Q32.0 24.9 33.5 25.7M34.4 20.1Q34.7 20.8 34.8 22.2M31.9 20.3Q29.9 21.0 29.4 21.6M22.0 19.7Q21.3 20.3 20.2 21.3M28.3 19.0Q28.7 19.3 28.5 20.7M22.9 19.0Q22.0 20.9 22.7 21.3M32.7 20.8Q34.7 21.0 35.2 22.2M31.6 25.2Q30.2 24.8 30.0 25.5M24.2 26.0Q22.6 26.1 22.2 26.6M24.4 23.5Q23.4 24.5 22.6 25.6M27.6 20.7Q28.1 21.7 27.9 23.2M28.9 18.5Q29.7 17.8 30.9 18.7M22.1 21.3Q19.9 21.2 19.3 21.8M26.2 20.1Q27.8 20.4 28.3 21.1M24.2 24.2Q23.2 24.4 23.1 25.1M31.8 24.4Q32.1 25.2 33.0 26.1" stroke="#3e311b" stroke-width=".45" opacity=".8" fill="none"/><!--/H6-->
      <g stroke="#43361f" stroke-width=".8" opacity=".95">
        <!-- top-left flowers -->
        <path d="M2 4C6 0 12 0 16 3C20 6 20 12 16 15C12 18 6 17 3 14C0 11 0 7 2 4ZM5 6C8 3 13 4 15 7C16 10 14 13 11 14C8 14 5 12 4 9ZM8 8C10 6 12 8 12 10C11 12 8 12 8 10Z"/>
        <path d="M15 8C19 4 25 4 28 8C31 12 29 18 25 20C21 22 16 20 14 16M18 10C21 8 25 9 26 12C27 15 25 18 22 18C19 18 17 16 17 13M20 12C22 11 23 13 23 14C22 16 20 15 20 14Z"/>
        <path d="M1 16C4 20 6 24 4 30M4 20C8 20 12 24 12 28C8 28 5 25 4 20ZM14 20C16 24 15 28 12 32M2 30C5 30 8 33 8 36C5 36 2 34 2 30ZM1 36C3 38 4 41 3 44"/>
        <path d="M26 18C30 20 34 24 36 28M28 24C30 22 33 23 34 25C32 27 29 27 28 24ZM22 22C23 26 22 30 20 32"/>
        <!-- butterfly top -->
        <path d="M42 26C40 22 41 18 44 18C46 18 46 22 44 26C46 23 50 22 51 25C51 28 47 29 44 27C46 30 45 33 42 33C40 32 41 29 43 27M43.500 26.500L38 30M40 28C37 27 34 29 34 32C37 33 40 31 40 28Z"/>
        <!-- bottom-right flowers -->
        <path d="M74 76C78 72 86 72 90 76C93 80 92 88 88 90C84 93 78 92 75 88C72 84 72 80 74 76ZM77 78C80 75 86 76 88 80C89 83 87 87 84 88C81 88 78 86 77 83ZM80 80C82 78 85 80 85 83C84 85 81 85 80 83Z"/>
        <path d="M66 92C70 88 78 90 80 94C82 98 80 104 76 106C72 108 66 106 64 102C63 98 64 94 66 92ZM68 95C71 93 76 94 77 97C78 100 76 103 73 104C70 104 67 102 67 99Z"/>
        <path d="M78 104C82 100 90 102 92 106M80 108C84 106 88 108 90 112C88 116 82 116 80 112ZM70 108C72 112 72 118 70 124M72 112C76 112 80 116 80 120C76 120 73 117 72 112ZM84 116C86 120 86 126 84 130M62 100C60 104 60 110 62 114M58 84C62 84 66 88 66 92M64 84C63 80 65 76 68 74M86 118C89 118 92 121 92 124"/>
        <path d="M76 120C78 122 80 126 79 130M88 92C90 94 92 98 92 102M68 116C66 120 67 126 70 130"/>
        <!-- butterfly bottom -->
        <path d="M58 74C56 70 57 67 60 67C62 68 62 72 60 75C62 72 66 72 67 75C66 78 62 78 60 76C61 79 60 82 57 82C55 81 56 78 58 76M59 75L54 78M56 76C53 75 50 77 50 80C53 81 56 79 56 76Z"/>
      </g>
    </svg>
    <div class="abs t6" style="top:40px">Stay inspired.</div>
    <div class="abs t6" style="top:53px">Never stop creating.</div>
  </div>
<!--T56b-->
<!--T78a-->  <!-- thumb 7 -->
  <div class="th" style="left:2.900px;top:489.200px;height:60px;background:#0d0d0d">
    <svg class="abs" style="left:0;top:0" width="92" height="60" viewBox="0 0 92 60"><defs><linearGradient id="g7" x1="0" y1="1" x2="1" y2="0"><stop offset="0" stop-color="#0d0d0d"/><stop offset=".35" stop-color="#161616"/><stop offset=".62" stop-color="#4a4a4a"/><stop offset=".78" stop-color="#6e6e6e"/><stop offset=".9" stop-color="#2b2b2b"/><stop offset="1" stop-color="#151515"/></linearGradient><filter id="b7"><feGaussianBlur stdDeviation="2.500"/></filter></defs><rect width="92" height="60" fill="#111"/><path d="M40 60L92 -4V30L66 60Z" fill="url(#g7)" filter="url(#b7)" opacity=".95"/><path d="M92 4L60 60H80L92 40Z" fill="#777" opacity=".35" filter="url(#b7)"/></svg>
    <div class="abs t7" style="left:12.500px">STELLA<br>GUREY</div>
    <div class="abs t7" style="left:28.500px">KEITH AGE<br>JUSON</div>
    <div class="abs t7" style="left:48.500px">YUSIE<br>TEREOR</div>
    <div class="abs t7" style="left:65px">ISAI<br>YARIHEAS</div>
    <div class="abs" style="left:0;top:20.700px;width:92px;text-align:center;text-indent:-3px;font:9.500px/11px 'Liberation Sans',sans-serif;color:#6a6a6a;letter-spacing:-.2px;transform:scaleX(.95)">WALK</div>
    <div class="abs" style="left:0;top:29.200px;width:92px;text-align:center;text-indent:-1px;font:bold 13.600px/16px 'Liberation Sans',sans-serif;color:#fff;letter-spacing:-.15px">ALONE</div>
    <div class="abs" style="left:0;top:45.500px;width:92px;text-align:center;text-indent:-3px;font:bold 2.800px/4px 'Liberation Sans',sans-serif;color:#d8d8d8;letter-spacing:.7px">A FILM BY TAUSEY</div>
  </div>
  <!-- thumb 8 -->
  <div class="th" style="left:99.900px;top:489.200px;height:60px;background:#fbdcc6">
    <svg class="abs" style="left:0;top:0" width="92" height="60" viewBox="0 0 92 60" fill="none" stroke-linecap="round" stroke-linejoin="round">
      <g stroke="#e8c3ab" stroke-width=".6"><path d="M4 2C10 12 18 22 30 30M8 8C8 4 10 2 13 3C14 6 12 8 8 8ZM12 14C13 10 16 8 19 10C19 13 16 15 12 14ZM17 20C19 16 22 15 25 17C24 20 21 22 17 20ZM22 25C25 22 28 22 30 24.500C29 27.500 25 28 22 25ZM9 10C5 11 3 14 4 17C7 17 9 14 9 10ZM14 16.500C10 18 9 21 10 24C13 23.500 15 20.500 14 16.500ZM19.500 22C16 24 15.500 27 17 29.500C20 28.500 21 25.500 19.500 22Z"/><path d="M14 60C20 50 30 44 42 44M20 52C19 48 21 45 24 45C25.500 48 24 51 20 52ZM27 47.500C27 43.500 30 41.500 33 42.500C33 45.500 31 47.500 27 47.500ZM34 45C35 41.500 38 40.500 41 42C40 45 37.500 46 34 45ZM24 52C27 53 28.500 56 27.500 59M31 48C34 49.500 35 52.500 34 55.500M38 46C41 48 41.500 51 40 54"/></g>
      <path d="M56 -2C62 -3 74 -4 82 -1C88 2 86 10 80 13C74 15 66 14 61 10C57 7 54 2 56 -2Z" fill="#cba99f"/>
      <path d="M55 15C57 11 63 9.500 69 10.500C75 12 79 16 78 21C77 26 71 28.500 65 27.500C59 26.500 53 21 55 15Z" fill="#b87a60"/>
      <g stroke="#4a3428" stroke-width=".5"><path d="M90 -1C82 8 74 18 68 28M84 4C84 9 81 14 76 17M80 10C82 14 80 20 76 24M88 6C89 12 87 20 82 26M92 14C90 22 86 30 80 36M76 2C72 6 68 12 66 20"/><g fill="#4a3428" stroke="none"><circle cx="79" cy="29" r=".4"/><circle cx="81" cy="31" r=".4"/><circle cx="78" cy="33" r=".4"/><circle cx="82" cy="34.500" r=".4"/><circle cx="80" cy="36.500" r=".4"/><circle cx="83" cy="29" r=".4"/><circle cx="84" cy="32.500" r=".4"/><circle cx="79" cy="38.500" r=".4"/><circle cx="85" cy="36" r=".4"/></g></g>
      <path d="M24 29.500L66.500 29L67 38.500L46 39.200L24.300 39Z" fill="#fffdf8"/>
      <g fill="#e9c46a"><circle cx="27" cy="30" r=".35"/><circle cx="35" cy="36.800" r=".35"/><circle cx="48" cy="29.300" r=".35"/><circle cx="57" cy="37" r=".35"/><circle cx="64" cy="30" r=".35"/><circle cx="30" cy="36" r=".35"/></g>
    </svg>
    <div class="abs" style="left:24px;top:31.300px;width:43px;text-align:center;font:bold 4.700px/6px 'Liberation Sans',sans-serif;color:#2c2421;white-space:nowrap;letter-spacing:-.05px">Daily Motivation</div>
  </div>
<!--T78b-->
  <div id="track" class="abs"></div>
  <div id="thumb" class="abs"></div>
  <div id="uparr" class="abs"></div>
</div>

<!-- collapse handle -->
<svg class="abs" style="left:210.500px;top:258px;z-index:11" width="11" height="68" viewBox="0 0 11 68"><path d="M0 0H1C1 6 2.500 9 5.500 12C8 14.500 9 16.500 9 20V48C9 51.500 8 53.500 5.500 56C2.500 59 1 62 1 68H0Z" fill="#232526"/><path d="M5 33.300 3.500 35 5 36.700" fill="none" stroke="#e8e9eb" stroke-width="1" stroke-linecap="round" stroke-linejoin="round"/></svg>
<!-- TOOLBAR -->
<div id="bar" class="abs">

  <div class="box" style="left:217px;top:6px;width:104.5px;height:19.5px"></div>
  <div class="tb" style="left:221.7px;top:9.5px;font-size:9px">Open Sans</div>
  <svg class="abs" style="left:308px;top:12.5px" width="8" height="6" viewBox="0 0 8 6" fill="none" stroke="#0e1318" stroke-width="1.1" stroke-linecap="round" stroke-linejoin="round"><path d="M1 1.2 4 4.3 7 1.2"/></svg>
  <div class="box" style="left:327px;top:6px;width:67px;height:19.5px"></div>
  <div class="abs" style="left:347.5px;top:6.5px;width:1px;height:18.5px;background:#c9ccd2"></div>
  <div class="abs" style="left:373.5px;top:6.5px;width:1px;height:18.5px;background:#c9ccd2"></div>
  <div class="abs" style="left:334.8px;top:15.2px;width:5px;height:1.1px;background:#0e1318"></div>
  <div class="tb" style="left:351.8px;top:9.5px;letter-spacing:-.2px">59,2</div>
  <div class="abs" style="left:381px;top:15.2px;width:5.4px;height:1.1px;background:#0e1318"></div>
  <div class="abs" style="left:383.15px;top:13px;width:1.1px;height:5.4px;background:#0e1318"></div>
  <!-- text colour -->
  <div class="abs" style="left:405.2px;top:7.6px;font-size:11.8px;line-height:12px;color:#0e1318">A</div>
  <div class="abs" style="left:402.2px;top:19.8px;width:14.3px;height:2.8px;border-radius:1.4px;background:linear-gradient(90deg,#f5483f 0,#fa9b1e 22%,#f7d51c 40%,#45c35a 58%,#2f9df0 78%,#6a5cf0 100%)"></div>
  <div class="abs" style="left:427.3px;top:10.2px;font-size:11.6px;line-height:12px;font-weight:bold;color:#0e1318">B</div>
  <div class="abs" style="left:448.4px;top:11.3px;font:italic 12.2px/12px 'Liberation Mono',monospace;color:#0e1318">I</div>
  <div class="abs" style="left:470.2px;top:10.2px;font-size:11px;line-height:12px;color:#0e1318">U</div>
  <div class="abs" style="left:469.9px;top:21.2px;width:8.2px;height:1px;background:#0e1318"></div>
  <div class="abs" style="left:492px;top:10.2px;font-size:11px;line-height:12px;color:#0e1318">S</div>
  <div class="abs" style="left:491px;top:15.9px;width:9px;height:1px;background:#0e1318"></div>
  <div class="abs" style="left:510.4px;top:9.9px;font-size:11.5px;line-height:12px;color:#0e1318;letter-spacing:-.2px">aA</div>
  <div class="dv" style="left:532px"></div>
  <svg class="abs" style="left:541px;top:9px" width="14" height="14" viewBox="0 0 14 14" stroke="#0e1318" stroke-width="1.15" stroke-linecap="round"><path d="M1.6 3h10.8M3.6 5.6h6.8M1.6 8.2h10.8M4.2 10.8h5.6"/></svg>
  <svg class="abs" style="left:563px;top:9px" width="14" height="14" viewBox="0 0 14 14" stroke="#0e1318" stroke-width="1.15" stroke-linecap="round"><path d="M6.2 3h5.6M6.2 7h5.6M6.2 10.8h5.6"/><g fill="#0e1318" stroke="none"><circle cx="2.8" cy="3" r="1"/><circle cx="2.8" cy="7" r="1"/><circle cx="2.8" cy="10.8" r="1"/></g></svg>
  <svg class="abs" style="left:584px;top:9px" width="14" height="14" viewBox="0 0 14 14" fill="none" stroke="#0e1318" stroke-width="1.15" stroke-linecap="round" stroke-linejoin="round"><path d="M1.6 3h5M1.6 7h5M1.6 10.8h5M11 2.6v8.8M9.4 4 11 2.3 12.6 4M9.4 10 11 11.7 12.6 10"/></svg>
  <div class="dv" style="left:606px"></div>
  <div class="tb" style="left:617.4px;top:9.7px;letter-spacing:.08px">Efeitos</div>
  <div class="dv" style="left:657px"></div>
  <svg class="abs" style="left:665px;top:7px" width="17" height="17" viewBox="0 0 17 17" fill="none"><circle cx="6" cy="9.6" r="4.1" stroke="#9a9da3" stroke-width=".8"/><circle cx="7.6" cy="8.7" r="4.1" stroke="#6c7076" stroke-width=".8" fill="#fff"/><circle cx="10.2" cy="7.4" r="4.1" stroke="#0e1318" stroke-width="1.1" fill="#fff"/></svg>
  <div class="tb" style="left:683.6px;top:9.7px;letter-spacing:.1px">Animar</div>
  <div class="abs" style="left:712.6px;top:8.4px;width:4.2px;height:4.2px;border-radius:50%;background:#8b5cf6"></div>
  <div class="dv" style="left:725px"></div>
  <div class="tb" style="left:735.8px;top:9.7px;letter-spacing:-.12px">Posição</div>
  <div class="dv" style="left:779px"></div>
  
  <svg class="abs" style="left:788px;top:9px" width="13" height="13" viewBox="0 0 13 13" shape-rendering="crispEdges"><g fill="#0e1318"><rect x="0" y="0" width="2.17" height="2.17"/><rect x="0" y="4.33" width="2.17" height="2.17"/><rect x="0" y="8.67" width="2.17" height="2.17"/><rect x="2.17" y="2.17" width="2.17" height="2.17"/><rect x="2.17" y="6.5" width="2.17" height="2.17"/><rect x="2.17" y="10.83" width="2.17" height="2.17"/></g><g fill="#0e1318" opacity=".62"><rect x="4.33" y="0" width="2.17" height="2.17"/><rect x="4.33" y="4.33" width="2.17" height="2.17"/><rect x="4.33" y="8.67" width="2.17" height="2.17"/></g><g fill="#0e1318" opacity=".42"><rect x="6.5" y="2.17" width="2.17" height="2.17"/><rect x="6.5" y="6.5" width="2.17" height="2.17"/><rect x="6.5" y="10.83" width="2.17" height="2.17"/></g><g fill="#0e1318" opacity=".22"><rect x="8.67" y="0" width="2.17" height="2.17"/><rect x="8.67" y="4.33" width="2.17" height="2.17"/><rect x="8.67" y="8.67" width="2.17" height="2.17"/></g><g fill="#0e1318" opacity=".1"><rect x="10.83" y="2.17" width="2.17" height="2.17"/><rect x="10.83" y="6.5" width="2.17" height="2.17"/><rect x="10.83" y="10.83" width="2.17" height="2.17"/></g></svg>
  <svg class="abs" style="left:809px;top:8px" width="14" height="15" viewBox="0 0 14 15" fill="none" stroke="#0e1318" stroke-width="1.15" stroke-linecap="round" stroke-linejoin="round"><rect x="1.8" y="1.8" width="9.6" height="3.4" rx="1.7"/><path d="M11.4 3.5h.6a1 1 0 0 1 1 1v1.6a1 1 0 0 1-1 1H7.2a1 1 0 0 0-1 1v.9"/><rect x="5.2" y="9" width="2" height="4.8" rx="1"/></svg>
  <svg class="abs" style="left:831px;top:7px" width="14" height="16" viewBox="0 0 14 16" fill="none" stroke="#0e1318" stroke-width="1.15" stroke-linecap="round" stroke-linejoin="round"><rect x="1.8" y="6.6" width="10" height="7.6" rx="1.4"/><path d="M4 6.6V4.6a2.9 2.9 0 0 1 5.6-1.1"/><path d="M6.8 11.8V9.2M5.9 10 6.8 9.1 7.7 10" stroke-width="1"/></svg>


</div>

<!-- WORKSPACE -->

<!-- page controls -->
<svg class="abs" style="left:768px;top:47px" width="13" height="15" viewBox="0 0 13 15" fill="none" stroke="#4b4f55" stroke-width="1" stroke-linecap="round" stroke-linejoin="round"><rect x="2.2" y="6.4" width="8.6" height="6.8" rx="1.2"/><path d="M4 6.4V4.9a2.6 2.6 0 0 1 5-.9"/><path d="M6.5 11.2V8.8M5.7 9.5l.8-.8.8.8" stroke-width=".9"/></svg>
<svg class="abs" style="left:791px;top:50px" width="12" height="12" viewBox="0 0 12 12" fill="none" stroke="#4b4f55" stroke-width="1" stroke-linecap="round" stroke-linejoin="round"><path d="M3.4 7.6H2.2a1 1 0 0 1-1-1V2.4a1 1 0 0 1 1-1h4a1 1 0 0 1 1 1v1"/><rect x="3.9" y="3.6" width="6.8" height="6.8" rx="1.1"/><path d="M7.3 5.6v2.8M5.9 7h2.8" stroke-width=".9"/></svg>
<svg class="abs" style="left:814px;top:48px" width="13" height="13" viewBox="0 0 13 13" fill="none" stroke="#4b4f55" stroke-width="1" stroke-linecap="round" stroke-linejoin="round"><path d="M5.2 3.2H3.2a1 1 0 0 0-1 1v6.4a1 1 0 0 0 1 1h4.6a1 1 0 0 0 1-1V9.2"/><path d="M8 1.8v5M5.5 4.3h5" /></svg>

<!-- the design page -->
<div id="page" class="abs">
  <!--FL0--><svg class="abs" style="left:0;top:0" width="301" height="426" viewBox="0 0 301 426" fill="none" stroke-linecap="round">
<defs><filter id="bl" x="-50%" y="-50%" width="200%" height="200%"><feGaussianBlur stdDeviation="3"/></filter><filter id="bl2" x="-50%" y="-50%" width="200%" height="200%"><feGaussianBlur stdDeviation="1.2"/></filter><filter id="bl3"><feGaussianBlur stdDeviation=".35"/></filter><linearGradient id="s1" gradientUnits="userSpaceOnUse" x1="0" y1="0" x2="60" y2="0"><stop offset="0" stop-color="#d9c8a6"/><stop offset=".515" stop-color="#d9c8a6"/><stop offset=".518" stop-color="#ad7b2f"/><stop offset="1" stop-color="#ad7b2f"/></linearGradient><linearGradient id="s2" gradientUnits="userSpaceOnUse" x1="0" y1="0" x2="100" y2="0"><stop offset="0" stop-color="#c9a36e"/><stop offset=".309" stop-color="#c9a36e"/><stop offset=".311" stop-color="#a35900"/><stop offset="1" stop-color="#a35900"/></linearGradient></defs>
<ellipse cx="31" cy="166" rx="5" ry="10" fill="#15140d" opacity=".95" filter="url(#bl)"/>
<ellipse cx="40" cy="168" rx="9" ry="11" fill="#3b3a4a" opacity=".55" filter="url(#bl)"/>
<ellipse cx="81.500" cy="234" rx="7" ry="6" fill="#44434c" opacity=".75" filter="url(#bl)"/>
<path d="M86 247Q55 263.5 -1 298" stroke="#3a3a2c" stroke-width="2" opacity=".6" filter="url(#bl2)"/>
<path d="M42 181Q22 222 -1 263" stroke="#55554a" stroke-width="1.4" opacity=".3" filter="url(#bl2)"/>
<g filter="url(#bl3)">
<path d="M45 176Q24 218 -1 261.5" stroke="url(#s1)" stroke-width="2.8"/>
<path d="M45 176Q24 218 -1 261.5" stroke="#b9975f" stroke-width=".6" opacity=".35" transform="translate(.6 .3)"/>
<path d="M88 243.5Q56 260 -1 295.5" stroke="url(#s2)" stroke-width="2.3"/>
<path d="M88 243.5Q56 260 -1 295.5" stroke="#ecd9b0" stroke-width=".7" opacity=".5" transform="translate(-.2 -.5)"/>
<ellipse cx="49" cy="170" rx="8" ry="8.500" fill="#a05c14" opacity=".9" filter="url(#bl2)"/>
<path d="M49.0 168.4Q47.9 163.6 49.9 158.8" stroke="#984e0a" stroke-width="0.7"/> <path d="M48.8 169.9Q49.1 165.9 49.0 158.6" stroke="#c08a44" stroke-width="1.1"/> <path d="M53.5 168.6Q54.5 169.0 58.8 166.8" stroke="#b87830" stroke-width="0.9"/> <path d="M45.5 169.3Q40.1 168.5 37.5 167.3" stroke="#a86018" stroke-width="0.9"/> <path d="M50.5 168.8Q53.7 165.8 58.3 162.2" stroke="#8a4508" stroke-width="0.9"/> <path d="M49.0 169.8Q51.5 164.3 55.3 158.9" stroke="#b87830" stroke-width="1.2"/> <path d="M48.3 172.3Q48.4 174.2 46.7 178.7" stroke="#8a4508" stroke-width="0.9"/> <path d="M47.2 169.5Q41.3 167.3 36.5 165.2" stroke="#b06a20" stroke-width="1.0"/> <path d="M50.6 167.4Q51.1 164.8 54.7 160.9" stroke="#c08a44" stroke-width="1.1"/> <path d="M47.6 165.9Q46.0 163.5 45.5 158.0" stroke="#b87830" stroke-width="0.7"/> <path d="M49.5 168.3Q52.1 163.3 52.1 161.2" stroke="#8a4508" stroke-width="0.9"/> <path d="M48.3 167.4Q48.4 165.3 47.0 159.6" stroke="#c08a44" stroke-width="1.3"/> <path d="M50.2 168.2Q52.5 164.4 54.1 162.3" stroke="#984e0a" stroke-width="0.7"/> <path d="M48.2 170.1Q44.9 170.7 39.0 168.0" stroke="#c08a44" stroke-width="1.1"/> <path d="M53.0 171.7Q58.1 172.7 61.1 174.5" stroke="#8a4508" stroke-width="0.9"/> <path d="M52.7 167.0Q54.1 164.3 55.9 164.4" stroke="#a05510" stroke-width="0.6"/> <path d="M52.5 167.8Q54.5 165.5 55.6 165.7" stroke="#b87830" stroke-width="1.4"/> <path d="M50.6 168.5Q54.6 166.3 55.1 164.2" stroke="#b87830" stroke-width="0.7"/> <path d="M48.8 170.1Q51.1 165.8 50.1 161.3" stroke="#a86018" stroke-width="1.2"/> <path d="M51.6 168.5Q53.0 168.1 57.3 165.1" stroke="#a05510" stroke-width="0.9"/> <path d="M50.8 173.6Q52.0 175.9 54.5 180.1" stroke="#b06a20" stroke-width="1.2"/> <path d="M50.7 171.0Q55.2 171.4 57.5 174.0" stroke="#8a4508" stroke-width="0.9"/> <path d="M49.6 165.4Q50.1 163.2 50.9 157.9" stroke="#b87830" stroke-width="1.4"/> <path d="M49.6 169.6Q52.1 167.8 56.7 165.0" stroke="#a05510" stroke-width="1.3"/> <path d="M48.4 170.3Q42.6 172.6 35.7 171.9" stroke="#b06a20" stroke-width="1.2"/> <path d="M49.8 173.3Q49.5 178.5 52.2 180.5" stroke="#c08a44" stroke-width="0.9"/> <path d="M48.1 170.7Q41.9 172.9 38.5 177.6" stroke="#8a4508" stroke-width="1.2"/> <path d="M50.8 172.9Q53.6 177.4 57.5 181.6" stroke="#a86018" stroke-width="0.6"/> <path d="M50.0 166.6Q49.4 166.0 51.4 162.0" stroke="#a86018" stroke-width="1.3"/> <path d="M49.0 168.9Q49.3 162.4 50.2 158.5" stroke="#c08a44" stroke-width="0.9"/> <path d="M46.7 170.8Q42.6 172.3 35.4 173.8" stroke="#a05510" stroke-width="0.7"/> <path d="M45.7 170.0Q41.7 168.4 35.8 169.3" stroke="#a86018" stroke-width="1.0"/> <path d="M48.4 167.6Q48.0 164.9 47.2 160.2" stroke="#984e0a" stroke-width="1.3"/> <path d="M49.2 169.9Q52.2 165.9 55.5 165.4" stroke="#984e0a" stroke-width="1.0"/> <path d="M46.4 168.9Q42.7 168.6 39.2 165.0" stroke="#c08a44" stroke-width="1.0"/> <path d="M52.0 167.0Q54.3 163.5 58.8 160.4" stroke="#8a4508" stroke-width="0.7"/> <path d="M48.9 169.8Q50.4 166.4 50.6 160.8" stroke="#b06a20" stroke-width="0.7"/> <path d="M47.9 165.8Q49.1 162.6 46.9 161.5" stroke="#984e0a" stroke-width="0.9"/> <path d="M48.0 170.3Q41.5 170.8 35.4 171.3" stroke="#b87830" stroke-width="0.9"/> <path d="M47.9 166.7Q46.6 163.2 46.1 159.6" stroke="#b87830" stroke-width="1.0"/> <path d="M53.3 172.1Q55.7 172.9 60.9 175.4" stroke="#984e0a" stroke-width="1.3"/> <path d="M50.6 174.1Q53.1 179.8 54.4 182.3" stroke="#8a4508" stroke-width="0.7"/> <path d="M49.2 170.0Q52.9 167.7 59.8 164.1" stroke="#8a4508" stroke-width="1.3"/> <path d="M49.8 169.4Q53.1 166.2 55.6 165.0" stroke="#b87830" stroke-width="1.3"/> <path d="M48.1 170.2Q43.7 169.6 39.1 170.9" stroke="#984e0a" stroke-width="1.4"/> <path d="M47.6 167.2Q45.8 161.1 43.7 157.1" stroke="#8a4508" stroke-width="1.0"/> <path d="M51.9 168.1Q53.9 165.8 55.5 165.7" stroke="#8a4508" stroke-width="0.8"/> <path d="M45.7 171.3Q41.6 174.1 37.3 174.2" stroke="#a05510" stroke-width="0.8"/> <path d="M50.5 166.0Q52.2 162.5 52.2 161.6" stroke="#b87830" stroke-width="1.4"/> <path d="M48.6 170.0Q44.7 166.8 39.7 164.4" stroke="#a05510" stroke-width="1.1"/> <path d="M46.8 169.0Q42.4 166.8 40.4 165.0" stroke="#b87830" stroke-width="0.9"/> <path d="M48.7 170.4Q47.7 173.7 44.0 179.1" stroke="#a86018" stroke-width="0.6"/> <path d="M48.8 170.2Q46.3 163.3 45.4 159.4" stroke="#8a4508" stroke-width="1.1"/> <path d="M48.9 169.8Q52.2 165.5 52.2 158.6" stroke="#a86018" stroke-width="1.1"/> <path d="M48.4 168.6Q49.3 163.0 46.6 159.9" stroke="#c08a44" stroke-width="1.1"/> <path d="M50.4 172.3Q53.2 176.9 56.6 180.2" stroke="#a05510" stroke-width="0.7"/> <path d="M51.5 168.9Q57.6 167.4 60.9 164.5" stroke="#c08a44" stroke-width="1.1"/> <path d="M44.5 168.0Q40.8 166.2 38.0 164.7" stroke="#984e0a" stroke-width="1.1"/> <path d="M48.8 170.2Q45.9 167.1 41.0 162.2" stroke="#a05510" stroke-width="1.3"/> <path d="M50.0 166.1Q50.2 162.7 52.4 157.4" stroke="#a86018" stroke-width="1.2"/> <path d="M47.2 168.4Q45.2 166.3 41.9 162.3" stroke="#a05510" stroke-width="1.1"/> <path d="M49.9 173.3Q51.6 177.0 52.0 179.8" stroke="#a86018" stroke-width="0.6"/> <path d="M48.3 168.8Q46.5 163.6 44.6 158.6" stroke="#8a4508" stroke-width="1.2"/> <path d="M48.5 169.9Q44.6 166.3 40.8 164.1" stroke="#984e0a" stroke-width="1.3"/> <path d="M49.0 169.2Q50.8 161.5 52.0 156.4" stroke="#a05510" stroke-width="0.8"/> <path d="M47.9 171.3Q43.1 174.9 41.1 179.5" stroke="#8a4508" stroke-width="1.3"/> <path d="M50.8 168.7Q52.8 166.3 55.1 165.3" stroke="#a86018" stroke-width="0.9"/> <path d="M48.6 168.2Q49.8 163.0 47.9 160.1" stroke="#984e0a" stroke-width="1.3"/> <path d="M53.1 167.4Q55.7 165.5 57.6 164.5" stroke="#8a4508" stroke-width="1.2"/> <path d="M49.6 170.2Q56.9 169.9 60.9 170.0" stroke="#b87830" stroke-width="0.8"/> <path d="M45.9 173.1Q43.0 178.1 39.2 180.0" stroke="#a05510" stroke-width="1.0"/> <path d="M50.3 168.5Q54.7 165.1 57.2 160.6" stroke="#b87830" stroke-width="1.0"/> <path d="M50.6 169.1Q52.8 166.4 56.5 165.4" stroke="#c08a44" stroke-width="1.4"/> <path d="M48.6 173.0Q48.0 175.4 48.2 180.1" stroke="#a86018" stroke-width="0.7"/> <path d="M46.5 170.2Q41.3 171.1 37.2 170.2" stroke="#8a4508" stroke-width="0.7"/> <path d="M48.9 168.9Q49.5 166.2 49.6 160.7" stroke="#c08a44" stroke-width="1.3"/> <path d="M47.8 171.1Q45.7 173.8 41.9 176.5" stroke="#a05510" stroke-width="1.4"/> <path d="M51.4 166.7Q52.6 162.7 55.9 160.4" stroke="#a86018" stroke-width="0.9"/> <path d="M48.6 169.6Q46.1 164.1 44.2 156.7" stroke="#b06a20" stroke-width="1.0"/> <path d="M53.3 171.4Q57.3 173.4 59.0 172.9" stroke="#8a4508" stroke-width="0.8"/> <path d="M45.6 168.4Q41.6 166.7 36.6 163.2" stroke="#8a4508" stroke-width="0.7"/> <path d="M49.1 167.3Q47.8 165.2 49.8 161.5" stroke="#a86018" stroke-width="1.1"/> <path d="M50.4 165.7Q50.1 162.4 52.1 160.8" stroke="#b06a20" stroke-width="1.1"/> <path d="M48.3 165.4Q48.4 163.7 47.6 159.3" stroke="#8a4508" stroke-width="1.0"/> <path d="M48.1 169.5Q46.8 167.5 42.8 164.4" stroke="#984e0a" stroke-width="0.8"/> <path d="M48.7 170.0Q45.8 165.7 44.1 162.0" stroke="#c08a44" stroke-width="0.9"/> <path d="M49.1 170.0Q54.6 165.3 60.0 162.8" stroke="#b06a20" stroke-width="1.3"/> <path d="M49.7 167.8Q50.5 161.4 53.7 156.9" stroke="#8a4508" stroke-width="1.3"/> <path d="M49.1 170.3Q53.8 173.0 61.9 175.1" stroke="#8a4508" stroke-width="0.6"/> <path d="M46.8 166.2Q45.6 163.7 42.8 157.7" stroke="#a86018" stroke-width="0.9"/> <path d="M48.9 170.3Q52.0 175.7 53.9 182.0" stroke="#b87830" stroke-width="1.4"/> <path d="M51.4 166.6Q53.5 165.0 55.1 161.5" stroke="#8a4508" stroke-width="0.9"/> <path d="M48.9 170.0Q51.1 164.8 53.5 160.5" stroke="#8a4508" stroke-width="0.8"/> <path d="M47.4 171.8Q46.5 175.0 43.4 176.4" stroke="#984e0a" stroke-width="0.9"/> <path d="M47.8 170.4Q42.7 171.6 40.6 172.1" stroke="#b87830" stroke-width="0.8"/> <path d="M52.3 169.2Q54.6 167.6 58.1 167.7" stroke="#984e0a" stroke-width="1.2"/> <path d="M48.5 170.0Q44.0 164.7 37.1 162.2" stroke="#c08a44" stroke-width="1.4"/> <path d="M49.8 168.3Q51.5 166.5 53.2 161.6" stroke="#a86018" stroke-width="0.6"/> <path d="M49.3 165.9Q49.5 164.3 49.9 160.7" stroke="#a05510" stroke-width="0.7"/> <path d="M48.9 170.5Q48.7 175.1 51.9 179.3" stroke="#b87830" stroke-width="0.7"/> <path d="M48.2 167.1Q46.7 164.2 47.3 161.9" stroke="#c08a44" stroke-width="1.4"/> <path d="M46.1 170.1Q43.7 170.9 39.3 169.9" stroke="#b06a20" stroke-width="1.3"/> <path d="M47.8 173.8Q45.8 176.1 46.0 180.2" stroke="#a86018" stroke-width="0.8"/> <path d="M48.7 170.5Q47.0 174.0 47.0 179.2" stroke="#a05510" stroke-width="0.8"/> <path d="M49.0 169.7Q51.4 164.4 54.0 156.7" stroke="#b06a20" stroke-width="1.0"/> <path d="M48.6 170.4Q45.7 174.9 42.1 177.0" stroke="#a86018" stroke-width="1.3"/> <path d="M47.9 171.1Q45.6 176.2 41.2 178.0" stroke="#984e0a" stroke-width="1.1"/> <path d="M50.0 169.0Q50.6 168.4 54.5 164.2" stroke="#984e0a" stroke-width="1.1"/> <path d="M49.6 169.8Q54.1 166.1 59.8 164.6" stroke="#b06a20" stroke-width="1.0"/> <path d="M50.0 167.0Q50.4 162.6 53.4 157.9" stroke="#c08a44" stroke-width="0.7"/> <path d="M49.0 168.6Q50.1 161.9 50.8 156.1" stroke="#8a4508" stroke-width="0.6"/> <path d="M49.0 168.2Q49.2 164.7 50.1 158.1" stroke="#8a4508" stroke-width="1.3"/> <path d="M44.8 172.3Q42.0 172.5 39.4 175.1" stroke="#984e0a" stroke-width="0.6"/> <path d="M50.6 172.5Q54.5 176.3 55.4 178.4" stroke="#a86018" stroke-width="0.7"/> <path d="M49.3 169.9Q55.1 167.7 61.0 163.3" stroke="#b06a20" stroke-width="0.8"/> <path d="M50.5 172.0Q53.1 177.7 58.8 180.4" stroke="#8a4508" stroke-width="0.7"/> <path d="M48.0 167.0Q48.1 162.4 45.6 156.8" stroke="#a05510" stroke-width="1.3"/> <path d="M49.7 168.5Q50.5 163.4 54.1 160.1" stroke="#c08a44" stroke-width="1.3"/> <path d="M50.0 173.4Q52.4 177.5 53.6 182.8" stroke="#8a4508" stroke-width="1.1"/> <path d="M46.8 169.5Q43.3 168.1 39.3 167.1" stroke="#c08a44" stroke-width="0.9"/> <path d="M53.4 168.3Q54.7 167.6 56.2 167.2" stroke="#a05510" stroke-width="1.2"/> <path d="M48.5 168.0Q46.7 164.5 47.7 161.5" stroke="#a05510" stroke-width="1.1"/> <path d="M49.4 168.7Q52.4 161.4 53.9 157.2" stroke="#b06a20" stroke-width="1.0"/> <path d="M45.7 173.2Q45.8 175.6 42.4 176.4" stroke="#b06a20" stroke-width="0.7"/> <path d="M51.6 173.2Q54.6 176.0 55.5 177.5" stroke="#c08a44" stroke-width="1.3"/> <path d="M49.2 168.9Q52.3 161.7 53.2 157.1" stroke="#a05510" stroke-width="1.4"/> <path d="M47.6 170.4Q41.8 169.9 36.9 171.7" stroke="#8a4508" stroke-width="0.7"/> <path d="M49.6 169.9Q56.6 166.0 61.5 164.8" stroke="#a05510" stroke-width="0.6"/> <path d="M50.5 168.1Q53.8 166.3 55.7 161.7" stroke="#b87830" stroke-width="1.4"/> <path d="M48.5 168.9Q48.9 163.4 45.8 157.4" stroke="#b87830" stroke-width="0.9"/> <path d="M46.2 169.7Q41.9 170.8 39.0 168.5" stroke="#b06a20" stroke-width="1.1"/> <path d="M48.6 170.1Q43.7 169.1 41.3 167.3" stroke="#8a4508" stroke-width="0.9"/> <path d="M48.6 170.0Q45.6 167.0 42.1 165.3" stroke="#a05510" stroke-width="0.9"/> <path d="M49.0 171.2Q50.3 176.5 50.7 181.9" stroke="#a86018" stroke-width="0.6"/> <path d="M48.9 169.9Q49.3 165.5 52.3 159.8" stroke="#b87830" stroke-width="0.9"/> <path d="M49.9 167.6Q51.1 163.8 53.4 158.9" stroke="#8a4508" stroke-width="1.1"/> <path d="M48.8 170.1Q49.0 164.9 51.4 162.2" stroke="#b06a20" stroke-width="0.7"/> <path d="M47.2 168.8Q44.6 167.0 41.8 164.2" stroke="#c08a44" stroke-width="1.1"/> <path d="M49.3 168.8Q49.0 166.1 52.0 160.7" stroke="#b06a20" stroke-width="1.0"/> <path d="M45.5 170.1Q41.7 171.7 40.3 169.9" stroke="#b87830" stroke-width="0.8"/> <path d="M51.9 168.5Q57.2 167.0 60.1 164.0" stroke="#b87830" stroke-width="1.1"/> <path d="M46.7 165.7Q44.0 163.2 42.8 157.6" stroke="#a86018" stroke-width="0.7"/> <path d="M49.6 170.3Q55.3 169.9 58.0 171.7" stroke="#8a4508" stroke-width="0.9"/> <path d="M49.0 173.7Q49.9 179.7 49.6 182.3" stroke="#8a4508" stroke-width="1.0"/> <path d="M45.8 166.4Q43.8 166.5 43.7 163.8" stroke="#b06a20" stroke-width="0.8"/> <path d="M49.2 169.8Q53.2 166.4 54.2 164.1" stroke="#a86018" stroke-width="1.2"/> <path d="M48.8 170.0Q47.4 162.4 49.2 158.0" stroke="#b06a20" stroke-width="1.1"/> <path d="M45.8 173.6Q41.4 178.3 40.1 180.3" stroke="#c08a44" stroke-width="1.4"/> <path d="M50.7 166.5Q53.4 163.6 55.1 158.2" stroke="#c08a44" stroke-width="1.1"/> <path d="M50.2 167.3Q51.7 162.2 54.6 158.4" stroke="#b87830" stroke-width="0.6"/> <path d="M49.4 165.3Q49.7 164.0 50.0 160.2" stroke="#a05510" stroke-width="1.2"/> <path d="M48.5 169.8Q45.6 163.5 42.9 160.5" stroke="#a05510" stroke-width="0.8"/> <path d="M49.3 169.3Q52.0 168.0 52.9 163.3" stroke="#984e0a" stroke-width="0.9"/> <path d="M52.8 173.0Q56.7 177.0 59.8 177.8" stroke="#a05510" stroke-width="0.8"/> <path d="M48.1 166.7Q47.5 162.5 47.0 161.0" stroke="#c08a44" stroke-width="1.2"/> <path d="M48.3 170.2Q42.1 169.1 37.2 170.9" stroke="#8a4508" stroke-width="1.3"/> <path d="M48.3 168.1Q47.6 163.1 46.5 160.5" stroke="#c08a44" stroke-width="0.8"/> <path d="M47.4 166.7Q46.2 161.9 43.9 158.3" stroke="#b87830" stroke-width="1.0"/> <path d="M47.3 167.1Q44.8 162.7 44.0 160.3" stroke="#b87830" stroke-width="1.0"/> <path d="M48.9 168.7Q49.7 166.1 49.1 161.0" stroke="#a86018" stroke-width="1.2"/> <path d="M50.5 169.9Q54.6 170.8 60.6 168.3" stroke="#b87830" stroke-width="1.4"/> <path d="M52.0 166.4Q54.9 165.1 55.6 162.2" stroke="#8a4508" stroke-width="0.8"/> <path d="M52.3 173.0Q54.2 173.0 56.4 176.4" stroke="#b06a20" stroke-width="1.2"/> <path d="M49.3 167.9Q49.0 163.5 51.2 158.3" stroke="#8a4508" stroke-width="0.6"/> <path d="M48.9 173.2Q49.7 179.2 49.4 182.7" stroke="#c08a44" stroke-width="1.2"/> <path d="M52.0 167.2Q55.6 164.9 57.9 161.6" stroke="#8a4508" stroke-width="0.9"/> <path d="M48.7 171.4Q48.0 178.5 47.9 184.0" stroke="#a86018" stroke-width="0.8"/> <path d="M47.1 165.8Q44.6 162.8 44.4 158.6" stroke="#b06a20" stroke-width="0.6"/> <path d="M49.4 169.1Q50.2 166.6 53.1 162.7" stroke="#a86018" stroke-width="1.0"/> <path d="M51.7 172.4Q54.9 175.2 58.1 177.0" stroke="#b06a20" stroke-width="0.9"/>
<ellipse cx="98" cy="234.3" rx="9" ry="6" fill="#9b6e2a" opacity=".8" filter="url(#bl2)"/>
<path d="M95.5 237.5Q92.7 239.4 92.0 241.2" stroke="#9b6e2a" stroke-width="1.2"/> <path d="M96.9 233.3Q92.3 229.9 90.7 229.5" stroke="#b48c4a" stroke-width="1.1"/> <path d="M97.8 233.3Q95.7 232.5 94.3 228.4" stroke="#a87c38" stroke-width="1.4"/> <path d="M101.5 231.4Q101.3 231.2 104.2 228.8" stroke="#a87c38" stroke-width="1.0"/> <path d="M102.4 235.9Q107.2 237.2 109.8 238.9" stroke="#8c6222" stroke-width="1.2"/> <path d="M96.0 231.9Q92.8 230.4 91.5 227.5" stroke="#8c6222" stroke-width="1.4"/> <path d="M102.3 232.9Q106.1 231.8 111.0 229.6" stroke="#8c6222" stroke-width="1.0"/> <path d="M96.7 234.9Q93.2 237.9 86.7 238.3" stroke="#9b6e2a" stroke-width="0.7"/> <path d="M100.8 235.8Q104.3 236.6 106.6 239.5" stroke="#9b6e2a" stroke-width="1.1"/> <path d="M99.5 233.7Q103.7 231.3 105.8 230.0" stroke="#a87c38" stroke-width="0.8"/> <path d="M98.6 234.0Q101.6 229.0 101.7 223.7" stroke="#8c6222" stroke-width="0.8"/> <path d="M99.4 232.7Q103.0 229.2 103.8 225.3" stroke="#8c6222" stroke-width="0.9"/> <path d="M99.6 231.7Q100.4 226.8 102.9 224.2" stroke="#94621e" stroke-width="1.3"/> <path d="M101.5 234.4Q106.5 235.7 110.3 234.6" stroke="#8c6222" stroke-width="0.9"/> <path d="M100.5 234.3Q104.9 232.6 108.3 234.3" stroke="#9b6e2a" stroke-width="1.1"/> <path d="M100.7 233.1Q105.6 231.8 110.6 227.6" stroke="#9b6e2a" stroke-width="0.8"/> <path d="M101.5 236.4Q104.0 239.6 106.1 239.8" stroke="#8c6222" stroke-width="0.9"/> <path d="M97.1 234.8Q92.7 236.6 85.9 239.1" stroke="#94621e" stroke-width="1.4"/> <path d="M100.9 235.1Q102.8 235.1 107.5 237.3" stroke="#8c6222" stroke-width="0.7"/> <path d="M100.3 235.2Q104.8 236.9 108.7 239.3" stroke="#9b6e2a" stroke-width="0.6"/> <path d="M99.8 236.7Q102.6 241.2 103.2 242.7" stroke="#94621e" stroke-width="0.9"/> <path d="M101.4 237.0Q102.4 237.8 106.5 241.8" stroke="#b48c4a" stroke-width="1.1"/> <path d="M99.6 235.7Q100.9 241.2 105.2 243.5" stroke="#9b6e2a" stroke-width="0.9"/> <path d="M99.1 233.4Q100.8 229.6 104.0 226.4" stroke="#8c6222" stroke-width="0.6"/> <path d="M96.0 233.5Q90.5 232.9 84.9 230.0" stroke="#b48c4a" stroke-width="1.1"/> <path d="M100.5 233.8Q103.9 234.7 106.7 232.4" stroke="#a87c38" stroke-width="1.0"/> <path d="M98.6 234.3Q100.5 232.8 105.9 230.0" stroke="#9b6e2a" stroke-width="1.4"/> <path d="M100.3 233.0Q101.9 231.5 105.1 229.6" stroke="#b48c4a" stroke-width="1.2"/> <path d="M102.4 234.1Q106.2 234.2 112.9 233.4" stroke="#b48c4a" stroke-width="1.0"/> <path d="M98.0 231.6Q95.4 225.8 96.4 223.6" stroke="#94621e" stroke-width="0.7"/> <path d="M96.8 237.4Q95.8 237.4 94.9 240.7" stroke="#8c6222" stroke-width="1.4"/> <path d="M101.8 237.1Q101.9 239.3 104.5 239.4" stroke="#b48c4a" stroke-width="0.9"/> <path d="M99.2 232.2Q99.7 226.8 101.7 224.6" stroke="#94621e" stroke-width="0.9"/> <path d="M95.9 232.9Q90.9 230.2 87.2 228.0" stroke="#a87c38" stroke-width="0.9"/> <path d="M96.8 231.4Q93.9 226.3 92.6 224.7" stroke="#8c6222" stroke-width="0.8"/> <path d="M100.8 236.8Q102.7 238.4 106.1 242.5" stroke="#94621e" stroke-width="0.7"/> <path d="M102.7 233.8Q106.7 233.5 110.7 232.9" stroke="#94621e" stroke-width="1.0"/> <path d="M97.7 237.8Q96.1 241.3 96.3 243.9" stroke="#b48c4a" stroke-width="1.0"/> <path d="M99.0 234.2Q105.5 234.0 109.7 231.9" stroke="#a87c38" stroke-width="0.9"/> <path d="M97.9 233.1Q96.0 227.8 93.9 224.7" stroke="#a87c38" stroke-width="0.8"/> <path d="M99.8 236.3Q101.1 238.9 103.2 241.4" stroke="#a87c38" stroke-width="0.8"/> <path d="M98.9 234.4Q103.7 233.8 109.8 236.6" stroke="#8c6222" stroke-width="1.0"/> <path d="M101.2 231.6Q104.3 228.7 107.5 225.4" stroke="#8c6222" stroke-width="1.3"/> <path d="M98.6 233.8Q100.6 229.0 100.2 225.3" stroke="#a87c38" stroke-width="0.9"/> <path d="M102.3 234.6Q105.9 236.0 109.6 235.1" stroke="#9b6e2a" stroke-width="1.3"/> <path d="M98.2 234.0Q93.4 229.5 89.9 227.0" stroke="#9b6e2a" stroke-width="1.4"/> <path d="M102.2 231.6Q104.7 227.4 109.1 226.5" stroke="#8c6222" stroke-width="1.4"/> <path d="M103.1 235.6Q104.0 236.1 106.6 236.6" stroke="#b48c4a" stroke-width="0.6"/> <path d="M100.8 236.4Q103.5 239.9 107.8 242.7" stroke="#9b6e2a" stroke-width="1.0"/> <path d="M100.5 234.1Q104.8 234.8 109.5 233.3" stroke="#9b6e2a" stroke-width="1.0"/> <path d="M102.4 232.6Q103.0 232.1 106.7 230.7" stroke="#8c6222" stroke-width="1.3"/> <path d="M99.1 236.7Q99.9 239.9 101.0 244.4" stroke="#a87c38" stroke-width="1.0"/> <path d="M98.7 234.5Q102.6 237.3 104.9 239.8" stroke="#a87c38" stroke-width="1.0"/> <path d="M100.0 234.0Q106.3 232.0 110.5 231.7" stroke="#9b6e2a" stroke-width="0.9"/> <path d="M98.8 234.3Q107.7 234.4 113.8 233.3" stroke="#a87c38" stroke-width="1.0"/> <path d="M99.9 234.1Q103.9 232.3 109.7 232.5" stroke="#b48c4a" stroke-width="0.8"/> <path d="M97.1 233.8Q93.4 230.2 86.3 230.1" stroke="#94621e" stroke-width="0.9"/> <path d="M100.8 234.7Q105.9 234.3 108.0 236.0" stroke="#94621e" stroke-width="0.7"/> <path d="M98.8 233.7Q100.6 231.7 101.6 227.5" stroke="#94621e" stroke-width="1.2"/> <path d="M99.4 234.7Q103.7 235.2 109.3 239.3" stroke="#94621e" stroke-width="0.9"/> <path d="M99.9 235.1Q105.8 239.3 109.2 240.9" stroke="#b48c4a" stroke-width="0.7"/> <path d="M95.5 235.7Q92.1 237.0 90.5 237.9" stroke="#8c6222" stroke-width="0.6"/> <path d="M97.9 233.0Q97.6 230.4 94.2 224.5" stroke="#9b6e2a" stroke-width="0.7"/> <path d="M98.1 233.1Q97.5 228.2 95.3 224.2" stroke="#9b6e2a" stroke-width="0.8"/> <path d="M98.6 234.4Q104.2 235.6 107.6 239.5" stroke="#a87c38" stroke-width="1.4"/> <path d="M98.7 234.3Q104.0 236.3 112.3 236.8" stroke="#a87c38" stroke-width="0.8"/> <path d="M99.2 233.5Q101.7 229.8 104.6 227.2" stroke="#9b6e2a" stroke-width="1.2"/> <path d="M101.2 234.5Q105.0 233.5 110.4 235.2" stroke="#b48c4a" stroke-width="1.3"/> <path d="M100.6 234.1Q107.0 232.0 110.2 233.4" stroke="#b48c4a" stroke-width="1.2"/> <path d="M94.2 232.2Q91.1 231.0 91.3 230.7" stroke="#b48c4a" stroke-width="0.8"/> <path d="M100.8 236.9Q105.1 241.4 106.5 243.6" stroke="#94621e" stroke-width="0.6"/> <path d="M97.2 234.2Q90.1 234.1 83.5 233.1" stroke="#8c6222" stroke-width="0.7"/> <path d="M100.8 234.5Q104.3 236.6 108.5 235.1" stroke="#b48c4a" stroke-width="1.1"/> <path d="M98.6 234.2Q101.7 228.5 103.8 224.6" stroke="#94621e" stroke-width="0.8"/> <path d="M97.2 234.0Q91.7 232.7 86.1 231.9" stroke="#9b6e2a" stroke-width="0.8"/> <path d="M97.4 236.5Q98.0 238.5 95.3 240.5" stroke="#8c6222" stroke-width="0.7"/> <path d="M96.2 233.2Q93.8 233.1 88.7 229.9" stroke="#94621e" stroke-width="0.8"/> <path d="M101.1 237.0Q103.6 239.5 105.4 241.5" stroke="#b48c4a" stroke-width="0.8"/> <path d="M98.6 233.1Q98.2 228.5 99.5 226.0" stroke="#94621e" stroke-width="1.0"/> <path d="M99.2 233.9Q106.3 230.2 110.2 227.7" stroke="#8c6222" stroke-width="1.0"/> <path d="M97.6 237.2Q95.7 237.9 96.2 241.6" stroke="#8c6222" stroke-width="1.0"/> <path d="M98.4 233.4Q99.7 231.4 97.6 227.7" stroke="#a87c38" stroke-width="0.9"/> <path d="M101.7 234.9Q104.1 236.6 108.1 236.0" stroke="#9b6e2a" stroke-width="1.2"/> <path d="M98.3 231.3Q98.9 230.1 98.0 225.9" stroke="#a87c38" stroke-width="0.9"/> <path d="M102.5 231.8Q103.5 231.6 106.9 229.0" stroke="#8c6222" stroke-width="1.3"/> <path d="M100.7 233.6Q105.7 231.4 109.1 230.8" stroke="#b48c4a" stroke-width="1.0"/> <path d="M95.2 232.7Q95.1 231.3 91.4 230.9" stroke="#8c6222" stroke-width="0.7"/> <path d="M99.6 230.8Q99.4 230.6 100.4 228.0" stroke="#a87c38" stroke-width="1.4"/> <path d="M98.5 234.3Q101.8 230.6 108.4 226.4" stroke="#b48c4a" stroke-width="0.8"/> <path d="M100.6 231.9Q103.1 228.7 106.2 225.8" stroke="#9b6e2a" stroke-width="1.1"/> <path d="M96.8 235.9Q92.3 238.4 90.6 241.9" stroke="#b48c4a" stroke-width="1.1"/> <path d="M99.8 233.0Q101.6 231.7 104.1 228.6" stroke="#94621e" stroke-width="0.9"/> <path d="M96.8 234.1Q94.6 234.7 89.0 233.0" stroke="#94621e" stroke-width="0.7"/> <path d="M99.1 230.6Q99.9 228.3 99.8 225.8" stroke="#94621e" stroke-width="0.8"/> <path d="M98.9 236.5Q97.8 238.8 99.5 240.6" stroke="#9b6e2a" stroke-width="1.2"/> <path d="M100.3 233.5Q104.2 229.2 111.0 228.5" stroke="#9b6e2a" stroke-width="0.8"/> <path d="M95.0 234.3Q91.7 236.2 88.1 234.4" stroke="#94621e" stroke-width="0.8"/> <path d="M99.0 232.4Q98.0 227.6 100.5 225.8" stroke="#94621e" stroke-width="1.0"/> <path d="M101.6 234.5Q105.4 234.0 111.7 235.3" stroke="#8c6222" stroke-width="0.7"/> <path d="M98.6 232.1Q98.2 227.7 99.0 223.8" stroke="#b48c4a" stroke-width="0.6"/> <path d="M99.7 234.0Q102.4 232.1 107.1 232.6" stroke="#94621e" stroke-width="1.3"/> <path d="M97.8 235.4Q95.7 241.1 92.9 243.6" stroke="#b48c4a" stroke-width="1.4"/> <path d="M101.4 235.2Q105.7 236.3 110.6 238.2" stroke="#b48c4a" stroke-width="0.6"/> <path d="M100.2 233.5Q101.7 233.4 106.7 230.6" stroke="#b48c4a" stroke-width="1.0"/> <path d="M98.9 233.9Q102.3 230.9 103.4 229.0" stroke="#a87c38" stroke-width="0.9"/> <path d="M99.9 234.6Q103.0 236.8 109.5 236.7" stroke="#a87c38" stroke-width="1.2"/> <path d="M103.0 234.1Q107.7 232.7 110.1 233.8" stroke="#8c6222" stroke-width="0.8"/> <path d="M97.2 234.9Q92.5 236.1 88.1 239.3" stroke="#b48c4a" stroke-width="1.1"/> <path d="M100.7 233.7Q107.3 232.5 110.4 231.1" stroke="#b48c4a" stroke-width="1.1"/> <path d="M99.1 236.2Q100.1 237.7 100.7 240.8" stroke="#b48c4a" stroke-width="0.6"/> <path d="M101.4 232.5Q104.0 232.4 105.1 230.3" stroke="#a87c38" stroke-width="0.9"/> <path d="M99.2 233.3Q100.1 229.3 104.1 226.7" stroke="#a87c38" stroke-width="0.8"/> <path d="M102.2 232.4Q104.7 231.5 107.4 229.7" stroke="#a87c38" stroke-width="1.3"/> <path d="M98.6 234.3Q106.6 234.8 113.2 235.6" stroke="#b48c4a" stroke-width="0.9"/> <path d="M98.3 230.8Q99.0 230.0 98.1 227.7" stroke="#9b6e2a" stroke-width="0.9"/> <path d="M101.4 233.7Q107.0 234.3 111.7 231.6" stroke="#94621e" stroke-width="1.3"/> <path d="M96.4 233.6Q93.4 231.8 89.2 231.2" stroke="#9b6e2a" stroke-width="0.7"/> <path d="M98.9 230.9Q99.6 228.1 99.8 223.8" stroke="#a87c38" stroke-width="1.1"/> <path d="M99.8 233.3Q105.4 229.9 108.0 227.0" stroke="#b48c4a" stroke-width="1.4"/> <path d="M99.5 232.8Q101.7 228.7 105.1 224.6" stroke="#b48c4a" stroke-width="1.0"/> <path d="M102.7 232.9Q107.6 231.6 110.4 230.3" stroke="#a87c38" stroke-width="0.6"/> <path d="M97.6 232.3Q98.2 230.3 95.5 227.3" stroke="#94621e" stroke-width="0.8"/> <path d="M99.1 234.0Q105.1 231.8 109.7 229.7" stroke="#b48c4a" stroke-width="0.8"/> <path d="M103.6 234.4Q106.3 233.7 110.1 234.5" stroke="#a87c38" stroke-width="1.1"/> <path d="M98.6 235.9Q100.4 239.1 99.0 240.9" stroke="#a87c38" stroke-width="1.1"/> <path d="M97.9 234.4Q90.5 235.1 84.6 236.8" stroke="#a87c38" stroke-width="0.6"/> <path d="M99.3 234.5Q106.0 236.2 113.1 237.4" stroke="#8c6222" stroke-width="0.7"/> <path d="M102.5 234.9Q106.6 236.4 113.7 236.4" stroke="#94621e" stroke-width="0.8"/> <path d="M95.9 231.9Q92.9 229.3 91.2 227.6" stroke="#9b6e2a" stroke-width="1.1"/> <path d="M97.6 233.6Q92.6 229.3 89.4 227.6" stroke="#9b6e2a" stroke-width="0.6"/> <path d="M97.1 231.0Q96.8 227.1 95.1 226.0" stroke="#8c6222" stroke-width="1.2"/> <path d="M98.8 235.5Q99.4 240.1 100.9 244.3" stroke="#8c6222" stroke-width="1.3"/> <path d="M101.6 237.5Q103.9 238.6 107.0 243.0" stroke="#a87c38" stroke-width="1.0"/> <path d="M100.9 235.8Q102.2 238.2 106.5 239.2" stroke="#a87c38" stroke-width="0.7"/> <path d="M98.7 235.1Q98.9 237.2 100.0 242.7" stroke="#94621e" stroke-width="1.3"/> <path d="M101.6 233.0Q104.6 231.5 107.6 230.5" stroke="#8c6222" stroke-width="0.7"/> <path d="M102.4 234.5Q104.9 232.8 108.2 234.7" stroke="#94621e" stroke-width="1.1"/> <path d="M99.1 232.3Q100.6 228.1 101.1 226.3" stroke="#b48c4a" stroke-width="1.4"/> <path d="M95.8 232.5Q94.3 230.5 92.0 230.0" stroke="#94621e" stroke-width="0.9"/> <path d="M95.3 236.7Q93.8 238.5 92.1 239.2" stroke="#a87c38" stroke-width="0.8"/>
</g></svg><!--FL1-->
  <svg class="abs" style="left:0;top:0;opacity:.4;mix-blend-mode:soft-light" width="301" height="426"><filter id="nz"><feTurbulence type="fractalNoise" baseFrequency=".9" numOctaves="2" seed="3"/><feColorMatrix type="saturate" values="0"/></filter><rect width="301" height="426" filter="url(#nz)"/></svg>
  <div id="glass" class="abs"></div>
  <!--FLOWERS2-->
  <div class="ml" style="top:129.0px;left:0px;letter-spacing:0.83px;text-indent:0.83px">QUE O APOIO E O</div>
  <div class="ml" style="top:157.6px;left:0px;letter-spacing:0.52px;text-indent:0.52px">AMOR DOS QUE</div>
  <div class="ml" style="top:186.2px;left:0px;letter-spacing:-0.19px;text-indent:-0.19px">FICARAM SIRVAM DE</div>
  <div class="ml" style="top:214.8px;left:-1.2px;letter-spacing:0.0px;text-indent:0.0px">ALGUM CONSOLO</div>
  <div class="ml" style="top:243.4px;left:-0.3px;letter-spacing:-0.25px;text-indent:-0.25px">PARA SEU CORAÇÃO.</div>
  <div class="ml" style="top:272.0px;left:0.6px;letter-spacing:-0.85px;text-indent:-0.85px">MEUS PÊSAMES!</div>
  <div class="sig" style="top:373px">Com Carinho,</div>
  <div class="sig" style="top:393.5px">Fulano</div>
</div>

<!-- floating toolbar -->
<div id="ftb" class="abs">
  <svg class="abs" style="left:6px;top:6px" width="13" height="13" viewBox="0 0 13 13"><defs><linearGradient id="mg" x1="0" y1="1" x2="1" y2="0"><stop offset="0" stop-color="#7a3df5"/><stop offset="1" stop-color="#1f6bff"/></linearGradient></defs><path fill="url(#mg)" d="M6.9 1.6c.5 2.6 1.5 3.6 4.3 4.3-2.8.7-3.800 1.700-4.300 4.500-.5-2.800-1.500-3.800-4.300-4.500 2.800-.7 3.800-1.700 4.300-4.300z"/><path fill="#2a62ff" d="M2 .8c.2.900.500 1.200 1.400 1.400-.9.200-1.200.5-1.400 1.400-.2-.9-.5-1.200-1.400-1.400.9-.2 1.200-.5 1.400-1.400z"/><path fill="#3a5cff" d="M11 1.200c.15.700.4.950 1.100 1.100-.7.150-.95.400-1.100 1.100-.15-.7-.4-.95-1.100-1.100.7-.15.950-.4 1.100-1.100z"/><path fill="#6a44f8" d="M2.300 9.600c.17.800.45 1.080 1.250 1.250-.8.170-1.080.45-1.250 1.250-.17-.8-.45-1.080-1.250-1.250.8-.17 1.080-.45 1.250-1.250z"/></svg>
  <div class="tb" style="left:23.3px;top:6.7px;letter-spacing:-.03px;-webkit-text-stroke:.35px #0e1318">Texto Mágico</div>
  <div class="abs" style="left:89.3px;top:5.5px;width:1px;height:15px;background:#dfe1e5"></div>
  <svg class="abs" style="left:98.500px;top:6.500px" width="13" height="13" viewBox="0 0 13 13" fill="none" stroke="#0e1318" stroke-width="1.1" stroke-linecap="round" stroke-linejoin="round"><path d="M3.600 8.500H2.400a1.100 1.100 0 0 1-1.100-1.100V2.300a1.100 1.100 0 0 1 1.100-1.100h4.600a1.100 1.100 0 0 1 1.100 1.100v1"/><rect x="4.300" y="3.900" width="7.400" height="7.700" rx="1.200"/><path d="M8 6.200v3.100M6.450 7.750h3.100" stroke-width="1"/></svg>
  <svg class="abs" style="left:120.500px;top:5.500px" width="13" height="14" viewBox="0 0 13 14" fill="none" stroke="#0e1318" stroke-width="1.100" stroke-linecap="round" stroke-linejoin="round"><path d="M1.500 3.500h10M4.600 3.300V2.400a1 1 0 0 1 1-1h1.800a1 1 0 0 1 1 1v.9M2.600 3.700l.5 8a1.200 1.200 0 0 0 1.200 1.100h4.400a1.200 1.200 0 0 0 1.200-1.100l.5-8M5.400 6v4.300M7.600 6v4.300"/></svg>
  <svg class="abs" style="left:141.500px;top:10.500px" width="13" height="5" viewBox="0 0 13 5" fill="#0e1318"><circle cx="2" cy="2.400" r="1.250"/><circle cx="6.500" cy="2.400" r="1.250"/><circle cx="11" cy="2.400" r="1.250"/></svg>
</div>

<!-- selection box -->
<div id="sel" class="abs"></div>
<div class="hd" style="left:581.9px;top:436.400px"></div>
<div class="hd" style="left:767.1px;top:436.400px"></div>
<div class="hd" style="left:581.9px;top:475.400px"></div>
<div class="hd" style="left:767.1px;top:475.400px"></div>
<div class="pill" style="left:583.9px;top:454.600px"></div>
<div class="pill" style="left:769.1px;top:454.600px"></div>

<!-- add page -->
<div id="addp" class="abs"></div>
<div class="abs" style="left:528px;top:514.800px;width:301px;text-align:center;font-weight:bold;font-size:9px;line-height:12px;color:#1e2329;white-space:nowrap;letter-spacing:-.08px">+ Adicionar página</div>
<div class="rb" style="left:659px;top:500.300px"><svg class="abs" style="left:2.400px;top:2.400px" width="9" height="9" viewBox="0 0 9 9" fill="none" stroke="#0e1318" stroke-width=".8" stroke-linecap="round" stroke-linejoin="round"><path d="M1.400 4.700A3.100 3.100 0 0 1 6.600 2.200M7.600 4.300A3.100 3.100 0 0 1 2.400 6.800"/><path d="M6.800 .9v1.500H5.300M2.200 8.100V6.600h1.500"/></svg></div>
<div class="rb" style="left:681.800px;top:500.300px"><svg class="abs" style="left:1.900px;top:1.900px" width="10" height="10" viewBox="0 0 10 10" fill="none" stroke="#0e1318" stroke-width=".8" stroke-linecap="round" stroke-linejoin="round"><path d="M5 1.200v7.600M1.200 5h7.600M4.200 2 5 1.200l.8.800M4.200 8 5 8.800l.8-.8M2 4.200 1.200 5l.8.800M8 4.200 8.800 5 8 5.800"/></svg></div>

<!-- comment button -->
<div id="cmt" class="abs"><svg class="abs" style="left:4.500px;top:4.500px" width="16" height="16" viewBox="0 0 16 16" fill="none" stroke="#0e1318" stroke-width="1.100" stroke-linecap="round" stroke-linejoin="round"><path d="M9.200 3.100H7.400a4.700 4.700 0 0 0-2.300 8.800l.2 1.300 1.500-.8h1.200a4.700 4.700 0 0 0 4.600-3.800"/><path d="M12.500 2v3.400M10.800 3.700h3.400"/></svg></div>

</body>
</html>
